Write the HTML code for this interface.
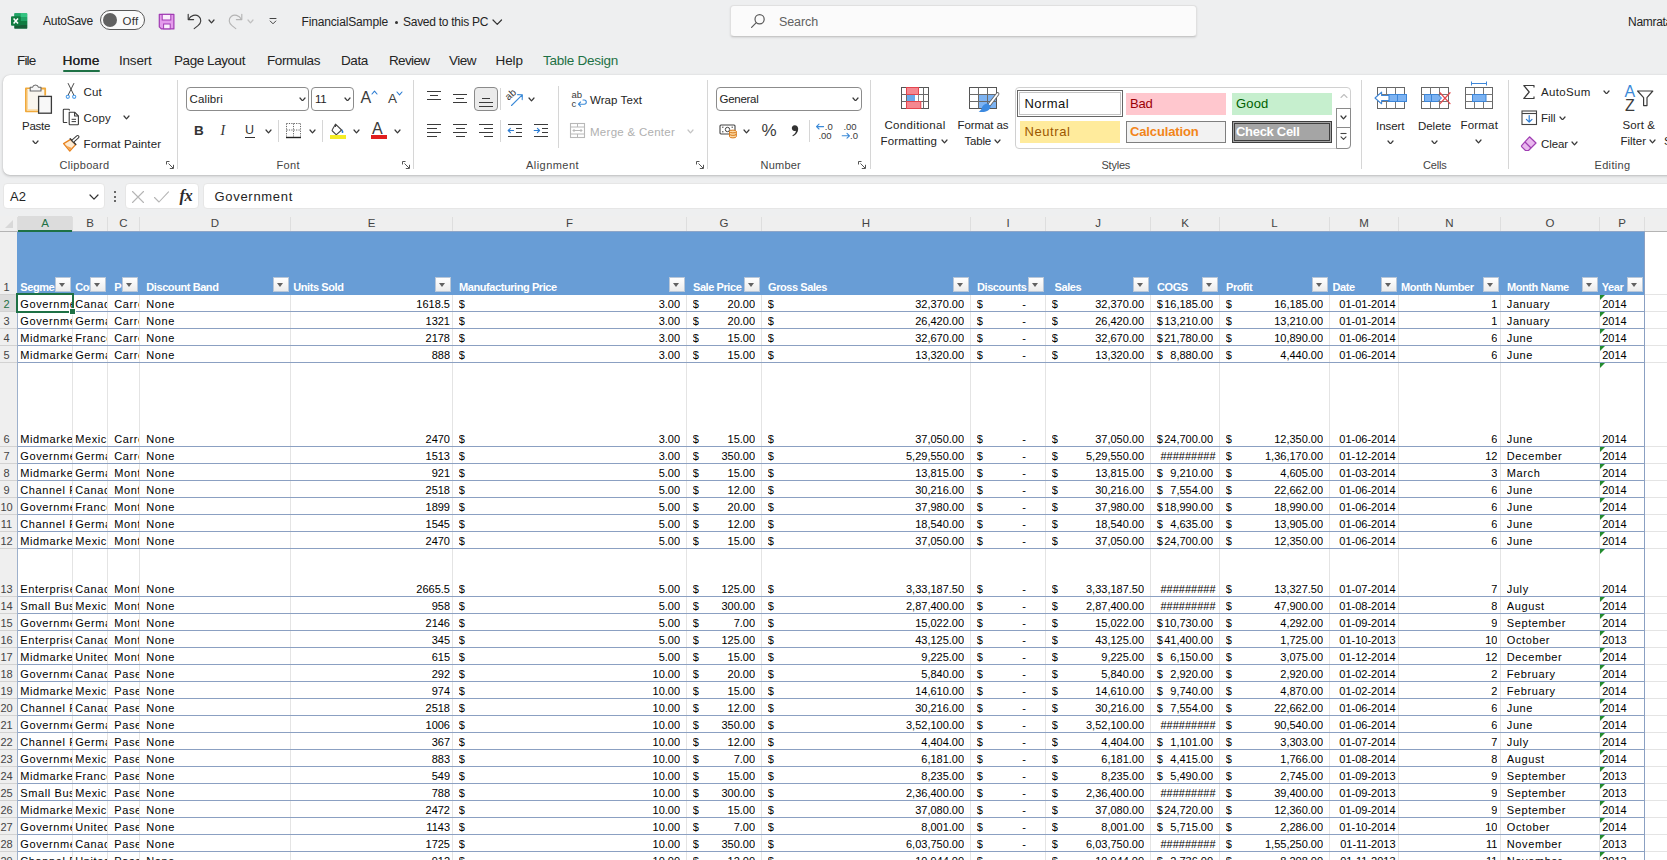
<!DOCTYPE html>
<html lang="en"><head><meta charset="utf-8"><title>FinancialSample - Excel</title>
<style>
html,body{margin:0;padding:0;width:1667px;height:860px;overflow:hidden;}
body{background:#eeeff0;}
#root{position:relative;width:1667px;height:860px;overflow:hidden;background:#eeeff0;font-family:"Liberation Sans",sans-serif;}
.b{position:absolute;box-sizing:border-box;}
.t{position:absolute;white-space:nowrap;}
.c{position:absolute;white-space:nowrap;overflow:hidden;font-size:11px;line-height:17px;height:17px;color:#000;}
.h{position:absolute;white-space:nowrap;overflow:hidden;font-size:11px;line-height:17px;height:17px;color:#fff;font-weight:bold;letter-spacing:-0.42px;}
.r{text-align:right;}
.x{letter-spacing:0.6px;}
.rh{position:absolute;left:0;width:13px;text-align:center;font-size:11px;line-height:17px;height:17px;color:#444;}
.ch{position:absolute;top:216px;height:15px;line-height:15px;font-size:11.5px;color:#4a4a4a;text-align:center;}
.fb{position:absolute;width:16px;height:15px;box-sizing:border-box;background:linear-gradient(#ffffff,#ececec);border:1px solid #b9c7d8;}
.fb:after{content:"";position:absolute;left:3.2px;top:5px;border-left:3.8px solid transparent;border-right:3.8px solid transparent;border-top:4.2px solid #616161;}
.gt{position:absolute;width:0;height:0;border-top:5.5px solid #228b2e;border-right:5.5px solid transparent;}
</style></head>
<body>
<div id="root">
<svg class="b" style="left:10.0px;top:12.0px;" width="18" height="18" viewBox="0 0 18 18">
<rect x="4.4" y="1.2" width="12.8" height="15.4" rx="1.2" fill="#21a366"/>
<rect x="4.4" y="1.2" width="6.4" height="3.9" fill="#21a366"/>
<rect x="10.8" y="1.2" width="6.4" height="3.9" fill="#33c481"/>
<rect x="4.4" y="5.1" width="6.4" height="3.9" fill="#107c41"/>
<rect x="10.8" y="5.1" width="6.4" height="3.9" fill="#21a366"/>
<rect x="4.4" y="9" width="6.4" height="3.8" fill="#0f6b38"/>
<rect x="10.8" y="9" width="6.4" height="3.8" fill="#107c41"/>
<rect x="4.4" y="12.8" width="12.8" height="3.8" fill="#185c37"/>
<rect x="1" y="4.2" width="9.6" height="9.6" rx="1" fill="#107c41"/>
<path d="M3.6 6.4 L8 11.6 M8 6.4 L3.6 11.6" stroke="#fff" stroke-width="1.5" fill="none"/>
</svg>
<div class="t" style="left:43.0px;top:13.0px;font-size:12px;line-height:16px;color:#242424;letter-spacing:-0.25px;">AutoSave</div>
<div class="b" style="left:99.8px;top:10.0px;width:45.0px;height:20.0px;border:1.3px solid #585858;border-radius:10px;background:#fafafa;"></div>
<div class="b" style="left:102.8px;top:13.0px;width:14.0px;height:14.0px;border-radius:7px;background:#616161;"></div>
<div class="t" style="left:122.5px;top:13.0px;font-size:11.5px;line-height:16px;color:#333;letter-spacing:0.30px;">Off</div>
<svg class="b" style="left:157.5px;top:12.5px;" width="17" height="17" viewBox="0 0 17 17">
<path d="M1.3 1.3 H15.9 V15.9 H3.3 L1.3 13.9 Z" fill="#e49bec" stroke="#a03bb3" stroke-width="1.2" stroke-linejoin="round"/>
<rect x="4.2" y="1.4" width="8.6" height="5.6" fill="#fbeefc" stroke="#a03bb3" stroke-width="1"/>
<rect x="5.6" y="11" width="6.6" height="4.8" fill="#fbeefc" stroke="#a03bb3" stroke-width="1"/>
</svg>
<svg class="b" style="left:186.0px;top:12.0px;" width="18" height="18" viewBox="0 0 18 18">
<path d="M2.2 2.2 V7.6 H7.6" fill="none" stroke="#3b3b3b" stroke-width="1.15" stroke-linecap="round" stroke-linejoin="round"/>
<path d="M2.6 7.2 C5 3.2 9.5 2 12.6 4.2 C16 6.8 15.2 11.2 12 13.6 L8.2 16.6" fill="none" stroke="#3b3b3b" stroke-width="1.15" stroke-linecap="round"/>
</svg>
<svg class="b" style="left:208.0px;top:19.1px;" width="7" height="4.8" viewBox="0 0 7 4.8"><path d="M1 1 L3.50 3.80 L6.00 1" fill="none" stroke="#3a3a3a" stroke-width="1.25" stroke-linecap="round" stroke-linejoin="round"/></svg>
<svg class="b" style="left:226.0px;top:12.0px;" width="18" height="18" viewBox="0 0 18 18">
<path d="M15.8 2.2 V7.6 H10.4" fill="none" stroke="#b4b4b4" stroke-width="1.15" stroke-linecap="round" stroke-linejoin="round"/>
<path d="M15.4 7.2 C13 3.2 8.5 2 5.4 4.2 C2 6.8 2.8 11.2 6 13.6 L9.8 16.6" fill="none" stroke="#b4b4b4" stroke-width="1.15" stroke-linecap="round"/>
</svg>
<svg class="b" style="left:247.0px;top:19.1px;" width="7" height="4.8" viewBox="0 0 7 4.8"><path d="M1 1 L3.50 3.80 L6.00 1" fill="none" stroke="#c0c0c0" stroke-width="1.25" stroke-linecap="round" stroke-linejoin="round"/></svg>
<svg class="b" style="left:267.5px;top:16.0px;" width="10" height="10" viewBox="0 0 10 10"><path d="M1.6 2.5 H8.4" stroke="#444" stroke-width="1" fill="none"/><path d="M2.2 5 L5 7.8 L7.8 5" fill="none" stroke="#444" stroke-width="1" stroke-linejoin="round" stroke-linecap="round"/></svg>
<div class="t" style="left:301.5px;top:13.5px;font-size:12px;line-height:16px;color:#242424;letter-spacing:-0.15px;">FinancialSample</div>
<div class="b" style="left:394.5px;top:21.0px;width:3.0px;height:3.0px;background:#333;border-radius:2px;"></div>
<div class="t" style="left:403.0px;top:13.5px;font-size:12px;line-height:16px;color:#242424;letter-spacing:-0.27px;">Saved to this PC</div>
<svg class="b" style="left:492.2px;top:18.8px;" width="10.5" height="6.4" viewBox="0 0 10.5 6.4"><path d="M1 1 L5.25 5.40 L9.50 1" fill="none" stroke="#333" stroke-width="1.2" stroke-linecap="round" stroke-linejoin="round"/></svg>
<div class="b" style="left:730.0px;top:5.0px;width:466.5px;height:31.5px;background:#fbfbfb;border:1px solid #e0e0e0;border-bottom-color:#c8c8c8;border-radius:4px;box-shadow:0 1px 2px rgba(0,0,0,.10);"></div>
<svg class="b" style="left:750.0px;top:13.0px;" width="16" height="16" viewBox="0 0 16 16"><circle cx="9.6" cy="6.2" r="4.6" fill="none" stroke="#5a5a5a" stroke-width="1.2"/><path d="M6.3 9.6 L1.6 14.4" stroke="#5a5a5a" stroke-width="1.2" stroke-linecap="round"/></svg>
<div class="t" style="left:779.0px;top:13.6px;font-size:12.5px;line-height:16px;color:#616161;letter-spacing:-0.10px;">Search</div>
<div class="t" style="left:1628.0px;top:13.5px;font-size:12px;line-height:16px;color:#242424;letter-spacing:-0.29px;">Namrata</div>
<div class="t" style="left:17.0px;top:51.5px;font-size:13.5px;line-height:18px;color:#242424;letter-spacing:-0.82px;">File</div>
<div class="t" style="left:62.5px;top:51.5px;font-size:13.5px;line-height:18px;color:#242424;letter-spacing:0.24px;text-shadow:0.35px 0 0 #242424;">Home</div>
<div class="t" style="left:119.0px;top:51.5px;font-size:13.5px;line-height:18px;color:#242424;letter-spacing:-0.21px;">Insert</div>
<div class="t" style="left:174.0px;top:51.5px;font-size:13.5px;line-height:18px;color:#242424;letter-spacing:-0.44px;">Page Layout</div>
<div class="t" style="left:267.0px;top:51.5px;font-size:13.5px;line-height:18px;color:#242424;letter-spacing:-0.41px;">Formulas</div>
<div class="t" style="left:341.0px;top:51.5px;font-size:13.5px;line-height:18px;color:#242424;letter-spacing:-0.38px;">Data</div>
<div class="t" style="left:389.0px;top:51.5px;font-size:13.5px;line-height:18px;color:#242424;letter-spacing:-0.63px;">Review</div>
<div class="t" style="left:449.0px;top:51.5px;font-size:13.5px;line-height:18px;color:#242424;letter-spacing:-0.50px;">View</div>
<div class="t" style="left:495.5px;top:51.5px;font-size:13.5px;line-height:18px;color:#242424;letter-spacing:-0.07px;">Help</div>
<div class="t" style="left:543.0px;top:51.5px;font-size:13.5px;line-height:18px;color:#1e7145;letter-spacing:-0.26px;">Table Design</div>
<div class="b" style="left:62.5px;top:69.7px;width:37.0px;height:2.1px;background:#1e7145;border-radius:1px;"></div>
<div class="b" style="left:3.0px;top:75.0px;width:1700.0px;height:99.5px;background:#fff;border-radius:7px;box-shadow:0 1px 3px rgba(0,0,0,.22),0 0 1px rgba(0,0,0,.15);"></div>
<svg class="b" style="left:23.0px;top:82.0px;" width="30" height="33" viewBox="0 0 30 33">
<path d="M7.5 6.5 H2.9 V29.3 H15.5" fill="none" stroke="#f0a93b" stroke-width="1.8" stroke-linejoin="round"/>
<path d="M4.6 7 V27.6 H15.5 V14.2 H22 V7 Z" fill="#faf6ee"/>
<path d="M4.4 8 V27.8 H15" fill="none" stroke="#fbd9a0" stroke-width="1.2"/>
<path d="M17.5 6.5 H22.2 V13.5" fill="none" stroke="#f0a93b" stroke-width="1.8" stroke-linejoin="round"/>
<path d="M7.2 9 V5.2 H9.6 a3 3 0 0 1 5.8 0 H18 V9 Z" fill="#f6f6f6" stroke="#6a6a6a" stroke-width="1.1" stroke-linejoin="round"/>
<rect x="15.6" y="14.4" width="12.8" height="16.8" fill="#f8f8f8" stroke="#3a3a3a" stroke-width="1.3"/>
</svg>
<div class="t" style="left:22.0px;top:118.0px;font-size:11.5px;line-height:16px;color:#242424;letter-spacing:-0.28px;">Paste</div>
<svg class="b" style="left:32.0px;top:139.6px;" width="7" height="4.8" viewBox="0 0 7 4.8"><path d="M1 1 L3.50 3.80 L6.00 1" fill="none" stroke="#3a3a3a" stroke-width="1.25" stroke-linecap="round" stroke-linejoin="round"/></svg>
<svg class="b" style="left:64.0px;top:82.0px;" width="14" height="18" viewBox="0 0 14 18">
<path d="M4.2 1.5 L9.8 13 M9.8 1.5 L4.2 13" stroke="#4a4a4a" stroke-width="1" fill="none" stroke-linecap="round"/>
<circle cx="3.8" cy="14.8" r="1.6" fill="none" stroke="#4a9be8" stroke-width="1.1"/>
<circle cx="10.2" cy="14.8" r="1.6" fill="none" stroke="#4a9be8" stroke-width="1.1"/>
</svg>
<div class="t" style="left:83.5px;top:84.0px;font-size:11.5px;line-height:16px;color:#242424;letter-spacing:0.20px;">Cut</div>
<svg class="b" style="left:62.0px;top:108.0px;" width="18" height="18" viewBox="0 0 18 18">
<path d="M7.4 2.6 V1.9 a.7 .7 0 0 0 -.7 -.7 H2 a.7 .7 0 0 0 -.7 .7 V13.8 a.7 .7 0 0 0 .7 .7 H5.2" fill="none" stroke="#3a3a3a" stroke-width="1.1"/>
<path d="M7.2 4.2 H12.6 L16.4 8 V16 a.7 .7 0 0 1 -.7 .7 H7.9 a.7 .7 0 0 1 -.7 -.7 Z" fill="#fff" stroke="#3a3a3a" stroke-width="1.1" stroke-linejoin="round"/>
<path d="M12.6 4.2 V8 H16.4" fill="none" stroke="#3a3a3a" stroke-width="1.1" stroke-linejoin="round"/>
<path d="M9.6 11.3 H14 M9.6 13.6 H14" stroke="#3a3a3a" stroke-width="1"/>
</svg>
<div class="t" style="left:83.5px;top:110.0px;font-size:11.5px;line-height:16px;color:#242424;letter-spacing:0.16px;">Copy</div>
<svg class="b" style="left:123.0px;top:115.1px;" width="7" height="4.8" viewBox="0 0 7 4.8"><path d="M1 1 L3.50 3.80 L6.00 1" fill="none" stroke="#3a3a3a" stroke-width="1.25" stroke-linecap="round" stroke-linejoin="round"/></svg>
<svg class="b" style="left:62.0px;top:134.0px;" width="18" height="18" viewBox="0 0 18 18">
<path d="M1.6 9.6 L8.6 5.4 L13.6 10.6 L7.8 17 Z" fill="#fdebd3" stroke="#e8831f" stroke-width="1.3" stroke-linejoin="round"/>
<path d="M3 10.2 L8 16.2 L10 14 L5 12 Z" fill="#f5a34d"/>
<path d="M8.2 4.8 L13.8 10.6" stroke="#3a3a3a" stroke-width="1.4" stroke-linecap="round"/>
<path d="M11.4 6.6 L15.6 2.8" stroke="#3a3a3a" stroke-width="3.6" stroke-linecap="round"/>
<path d="M11.4 6.6 L15.6 2.8" stroke="#fff" stroke-width="1.6" stroke-linecap="round"/>
</svg>
<div class="t" style="left:83.5px;top:135.5px;font-size:11.5px;line-height:16px;color:#242424;letter-spacing:0.11px;">Format Painter</div>
<div class="t" style="left:59.5px;top:157.0px;font-size:11px;line-height:16px;color:#444;letter-spacing:0.32px;">Clipboard</div>
<svg class="b" style="left:166.0px;top:161.0px;" width="9" height="9" viewBox="0 0 9 9"><path d="M0.5 3.5 V0.5 H3.5 M2.5 2.5 L7 7 M7.5 3.8 V7.5 H3.8" fill="none" stroke="#555" stroke-width="1"/></svg>
<div class="b" style="left:177.0px;top:80.0px;width:1.0px;height:89.0px;background:#d6d6d6;"></div>
<div class="b" style="left:186.0px;top:87.0px;width:123.0px;height:23.5px;border:1px solid #8c8c8c;border-radius:4px;background:#fff;"></div>
<div class="t" style="left:189.5px;top:90.5px;font-size:11.5px;line-height:16px;color:#242424;letter-spacing:0.13px;">Calibri</div>
<svg class="b" style="left:298.5px;top:96.6px;" width="7" height="4.8" viewBox="0 0 7 4.8"><path d="M1 1 L3.50 3.80 L6.00 1" fill="none" stroke="#3a3a3a" stroke-width="1.25" stroke-linecap="round" stroke-linejoin="round"/></svg>
<div class="b" style="left:311.0px;top:87.0px;width:42.5px;height:23.5px;border:1px solid #8c8c8c;border-radius:4px;background:#fff;"></div>
<div class="t" style="left:315.0px;top:90.5px;font-size:11.5px;line-height:16px;color:#242424;letter-spacing:-0.21px;">11</div>
<svg class="b" style="left:343.5px;top:96.6px;" width="7" height="4.8" viewBox="0 0 7 4.8"><path d="M1 1 L3.50 3.80 L6.00 1" fill="none" stroke="#3a3a3a" stroke-width="1.25" stroke-linecap="round" stroke-linejoin="round"/></svg>
<div class="t" style="left:360.5px;top:89.0px;font-size:16px;line-height:18px;color:#3b3b3b;letter-spacing:-0.17px;">A</div>
<svg class="b" style="left:370.5px;top:90.0px;" width="7" height="5" viewBox="0 0 7 5"><path d="M1 4 L3.5 1.2 L6 4" fill="none" stroke="#2b7cd3" stroke-width="1.1" stroke-linecap="round" stroke-linejoin="round"/></svg>
<div class="t" style="left:388.0px;top:91.0px;font-size:13.5px;line-height:16px;color:#3b3b3b;letter-spacing:0.00px;">A</div>
<svg class="b" style="left:396.0px;top:90.5px;" width="7" height="5" viewBox="0 0 7 5"><path d="M1 1 L3.5 3.8 L6 1" fill="none" stroke="#2b7cd3" stroke-width="1.1" stroke-linecap="round" stroke-linejoin="round"/></svg>
<div class="t" style="left:194.0px;top:122.5px;font-size:13.5px;line-height:16px;color:#333;letter-spacing:-0.75px;font-weight:bold;">B</div>
<div class="t" style="left:220.5px;top:122.5px;font-size:14px;line-height:16px;color:#333;letter-spacing:1.20px;font-family:'Liberation Serif',serif;font-style:italic;">I</div>
<div class="t" style="left:245.0px;top:121.5px;font-size:12.5px;line-height:16px;color:#333;letter-spacing:-0.03px;">U</div>
<div class="b" style="left:245.0px;top:136.5px;width:9.5px;height:1.0px;background:#333;"></div>
<svg class="b" style="left:264.5px;top:129.1px;" width="7" height="4.8" viewBox="0 0 7 4.8"><path d="M1 1 L3.50 3.80 L6.00 1" fill="none" stroke="#3a3a3a" stroke-width="1.25" stroke-linecap="round" stroke-linejoin="round"/></svg>
<div class="b" style="left:278.0px;top:120.0px;width:1.0px;height:22.0px;background:#d6d6d6;"></div>
<svg class="b" style="left:285.0px;top:122.0px;" width="17" height="17" viewBox="0 0 17 17">
<path d="M1.5 1.5 H15.5 M1.5 1.5 V14.5 M15.5 1.5 V14.5 M8.5 1.5 V14.5 M1.5 8 H15.5" stroke="#666" stroke-width="1" stroke-dasharray="1.2 1.2" fill="none"/>
<path d="M1 15.5 H16" stroke="#222" stroke-width="1.4"/>
</svg>
<svg class="b" style="left:309.0px;top:129.1px;" width="7" height="4.8" viewBox="0 0 7 4.8"><path d="M1 1 L3.50 3.80 L6.00 1" fill="none" stroke="#3a3a3a" stroke-width="1.25" stroke-linecap="round" stroke-linejoin="round"/></svg>
<div class="b" style="left:322.0px;top:120.0px;width:1.0px;height:22.0px;background:#d6d6d6;"></div>
<svg class="b" style="left:329.0px;top:122.0px;" width="18" height="18" viewBox="0 0 18 18">
<path d="M6.5 2.2 L12.6 8 L8 12.2 a1 1 0 0 1 -1.4 0 L3.4 9 a1 1 0 0 1 0 -1.4 Z" fill="#fff" stroke="#444" stroke-width="1.1" stroke-linejoin="round"/>
<path d="M6.5 2.2 V5" stroke="#444" stroke-width="1.1"/>
<path d="M13.2 7.2 c1.2 1.8 1.6 2.8 1 3.6 c-.6 .6 -1.6 .2 -1.6 -.8 c0 -.8 .3 -1.6 .6 -2.8 Z" fill="#2b7cd3"/>
<rect x="1" y="13" width="16" height="4" fill="#f4ec25"/>
</svg>
<svg class="b" style="left:352.5px;top:129.1px;" width="7" height="4.8" viewBox="0 0 7 4.8"><path d="M1 1 L3.50 3.80 L6.00 1" fill="none" stroke="#3a3a3a" stroke-width="1.25" stroke-linecap="round" stroke-linejoin="round"/></svg>
<div class="t" style="left:372.0px;top:120.5px;font-size:16px;line-height:16px;color:#3b3b3b;letter-spacing:1.20px;">A</div>
<div class="b" style="left:371.0px;top:135.0px;width:16.0px;height:4.0px;background:#e01e1e;"></div>
<svg class="b" style="left:394.0px;top:129.1px;" width="7" height="4.8" viewBox="0 0 7 4.8"><path d="M1 1 L3.50 3.80 L6.00 1" fill="none" stroke="#3a3a3a" stroke-width="1.25" stroke-linecap="round" stroke-linejoin="round"/></svg>
<div class="t" style="left:276.5px;top:157.0px;font-size:11px;line-height:16px;color:#444;letter-spacing:0.37px;">Font</div>
<svg class="b" style="left:402.0px;top:161.0px;" width="9" height="9" viewBox="0 0 9 9"><path d="M0.5 3.5 V0.5 H3.5 M2.5 2.5 L7 7 M7.5 3.8 V7.5 H3.8" fill="none" stroke="#555" stroke-width="1"/></svg>
<div class="b" style="left:413.0px;top:80.0px;width:1.0px;height:89.0px;background:#d6d6d6;"></div>
<div class="b" style="left:427.0px;top:91.0px;width:14.0px;height:1.0px;background:#3b3b3b;"></div>
<div class="b" style="left:430.0px;top:95.0px;width:8.0px;height:1.0px;background:#3b3b3b;"></div>
<div class="b" style="left:427.0px;top:99.0px;width:14.0px;height:1.0px;background:#3b3b3b;"></div>
<div class="b" style="left:453.0px;top:94.0px;width:14.0px;height:1.0px;background:#3b3b3b;"></div>
<div class="b" style="left:456.0px;top:98.0px;width:8.0px;height:1.0px;background:#3b3b3b;"></div>
<div class="b" style="left:453.0px;top:102.0px;width:14.0px;height:1.0px;background:#3b3b3b;"></div>
<div class="b" style="left:474.4px;top:87.0px;width:23.6px;height:23.6px;background:#ebebeb;border:1px solid #8a8a8a;border-radius:4px;"></div>
<div class="b" style="left:482.0px;top:98.0px;width:8.0px;height:1.0px;background:#3b3b3b;"></div>
<div class="b" style="left:479.0px;top:102.0px;width:14.0px;height:1.0px;background:#3b3b3b;"></div>
<div class="b" style="left:479.0px;top:106.0px;width:14.0px;height:1.0px;background:#3b3b3b;"></div>
<div class="b" style="left:500.0px;top:88.0px;width:1.0px;height:22.0px;background:#d6d6d6;"></div>
<svg class="b" style="left:505.0px;top:88.0px;" width="20" height="20" viewBox="0 0 20 20">
<text x="1" y="10" font-size="10" font-family="Liberation Sans" fill="#3a3a3a" transform="rotate(-42 6 8)">ab</text>
<path d="M6.5 17.5 L17 7.2 M12.6 6.6 L17.4 6.8 L17.2 11.6" fill="none" stroke="#3b8ad8" stroke-width="1.1" stroke-linecap="round" stroke-linejoin="round"/>
</svg>
<svg class="b" style="left:528.0px;top:97.1px;" width="7" height="4.8" viewBox="0 0 7 4.8"><path d="M1 1 L3.50 3.80 L6.00 1" fill="none" stroke="#3a3a3a" stroke-width="1.25" stroke-linecap="round" stroke-linejoin="round"/></svg>
<div class="b" style="left:558.0px;top:86.0px;width:1.0px;height:62.0px;background:#d6d6d6;"></div>
<svg class="b" style="left:570.0px;top:90.0px;" width="18" height="19" viewBox="0 0 18 19">
<text x="1.5" y="8" font-size="9.5" font-family="Liberation Sans" fill="#3a3a3a">ab</text>
<text x="1.5" y="16.5" font-size="9.5" font-family="Liberation Sans" fill="#3a3a3a">c</text>
<path d="M13 10 H14.2 a2 2 0 0 1 0 4.2 H8.6 M10.6 12 L8.4 14.2 L10.6 16.4" fill="none" stroke="#3b8ad8" stroke-width="1.1" stroke-linecap="round" stroke-linejoin="round"/>
</svg>
<div class="t" style="left:590.0px;top:91.5px;font-size:11.5px;line-height:16px;color:#242424;letter-spacing:0.07px;">Wrap Text</div>
<div class="b" style="left:427.0px;top:124.0px;width:14.0px;height:1.0px;background:#3b3b3b;"></div>
<div class="b" style="left:453.0px;top:124.0px;width:14.0px;height:1.0px;background:#3b3b3b;"></div>
<div class="b" style="left:479.0px;top:124.0px;width:14.0px;height:1.0px;background:#3b3b3b;"></div>
<div class="b" style="left:427.0px;top:128.0px;width:9.5px;height:1.0px;background:#3b3b3b;"></div>
<div class="b" style="left:455.5px;top:128.0px;width:9.0px;height:1.0px;background:#3b3b3b;"></div>
<div class="b" style="left:483.5px;top:128.0px;width:9.5px;height:1.0px;background:#3b3b3b;"></div>
<div class="b" style="left:427.0px;top:132.0px;width:14.0px;height:1.0px;background:#3b3b3b;"></div>
<div class="b" style="left:453.0px;top:132.0px;width:14.0px;height:1.0px;background:#3b3b3b;"></div>
<div class="b" style="left:479.0px;top:132.0px;width:14.0px;height:1.0px;background:#3b3b3b;"></div>
<div class="b" style="left:427.0px;top:136.0px;width:9.5px;height:1.0px;background:#3b3b3b;"></div>
<div class="b" style="left:455.5px;top:136.0px;width:9.0px;height:1.0px;background:#3b3b3b;"></div>
<div class="b" style="left:483.5px;top:136.0px;width:9.5px;height:1.0px;background:#3b3b3b;"></div>
<div class="b" style="left:500.0px;top:120.0px;width:1.0px;height:22.0px;background:#d6d6d6;"></div>
<div class="b" style="left:508.0px;top:124.0px;width:14.0px;height:1.0px;background:#3b3b3b;"></div>
<div class="b" style="left:516.0px;top:128.0px;width:6.0px;height:1.0px;background:#3b3b3b;"></div>
<div class="b" style="left:516.0px;top:132.0px;width:6.0px;height:1.0px;background:#3b3b3b;"></div>
<div class="b" style="left:508.0px;top:136.0px;width:14.0px;height:1.0px;background:#3b3b3b;"></div>
<div class="b" style="left:534.0px;top:124.0px;width:14.0px;height:1.0px;background:#3b3b3b;"></div>
<div class="b" style="left:542.0px;top:128.0px;width:6.0px;height:1.0px;background:#3b3b3b;"></div>
<div class="b" style="left:542.0px;top:132.0px;width:6.0px;height:1.0px;background:#3b3b3b;"></div>
<div class="b" style="left:534.0px;top:136.0px;width:14.0px;height:1.0px;background:#3b3b3b;"></div>
<svg class="b" style="left:507.0px;top:126.0px;" width="8" height="9" viewBox="0 0 8 9"><path d="M1.2 4.5 H6.6 M3.4 2.3 L1.2 4.5 L3.4 6.7" fill="none" stroke="#2b7cd3" stroke-width="1.1" stroke-linecap="round" stroke-linejoin="round"/></svg>
<svg class="b" style="left:533.0px;top:126.0px;" width="8" height="9" viewBox="0 0 8 9"><path d="M1.2 4.5 H6.6 M4.4 2.3 L6.6 4.5 L4.4 6.7" fill="none" stroke="#2b7cd3" stroke-width="1.1" stroke-linecap="round" stroke-linejoin="round"/></svg>
<svg class="b" style="left:569.0px;top:122.0px;" width="17" height="17" viewBox="0 0 17 17">
<rect x="1.5" y="1.5" width="14" height="14" fill="none" stroke="#b8b8b8" stroke-width="1.1"/>
<path d="M1.5 5 H15.5 M1.5 12 H15.5 M8.5 1.5 V5 M8.5 12 V15.5" stroke="#b8b8b8" stroke-width="1"/>
<path d="M4 8.5 H13 M5.5 7 L4 8.5 L5.5 10 M11.5 7 L13 8.5 L11.5 10" fill="none" stroke="#b8b8b8" stroke-width="1"/>
</svg>
<div class="t" style="left:590.0px;top:123.5px;font-size:11.5px;line-height:16px;color:#b0b0b0;letter-spacing:0.28px;">Merge &amp; Center</div>
<svg class="b" style="left:686.5px;top:129.1px;" width="7" height="4.8" viewBox="0 0 7 4.8"><path d="M1 1 L3.50 3.80 L6.00 1" fill="none" stroke="#c4c4c4" stroke-width="1.25" stroke-linecap="round" stroke-linejoin="round"/></svg>
<div class="t" style="left:526.0px;top:157.0px;font-size:11px;line-height:16px;color:#444;letter-spacing:0.45px;">Alignment</div>
<svg class="b" style="left:696.0px;top:161.0px;" width="9" height="9" viewBox="0 0 9 9"><path d="M0.5 3.5 V0.5 H3.5 M2.5 2.5 L7 7 M7.5 3.8 V7.5 H3.8" fill="none" stroke="#555" stroke-width="1"/></svg>
<div class="b" style="left:707.0px;top:80.0px;width:1.0px;height:89.0px;background:#d6d6d6;"></div>
<div class="b" style="left:716.0px;top:87.0px;width:145.5px;height:23.5px;border:1px solid #8c8c8c;border-radius:4px;background:#fff;"></div>
<div class="t" style="left:719.5px;top:90.5px;font-size:11.5px;line-height:16px;color:#242424;letter-spacing:-0.27px;">General</div>
<svg class="b" style="left:852.0px;top:96.6px;" width="7" height="4.8" viewBox="0 0 7 4.8"><path d="M1 1 L3.50 3.80 L6.00 1" fill="none" stroke="#3a3a3a" stroke-width="1.25" stroke-linecap="round" stroke-linejoin="round"/></svg>
<svg class="b" style="left:719.0px;top:123.0px;" width="19" height="16" viewBox="0 0 19 16">
<rect x="1" y="2" width="15" height="9" rx="1" fill="#fff" stroke="#444" stroke-width="1.1"/>
<circle cx="8.5" cy="6.5" r="2.2" fill="none" stroke="#444" stroke-width="1"/>
<path d="M3 4.2 h1.5 M12.5 4.2 h1.5 M3 8.8 h1.5" stroke="#444" stroke-width="1"/>
<path d="M10.5 8.5 v5 a3.4 1.4 0 0 0 6.8 0 v-5" fill="#fbd9a5" stroke="#d97a18" stroke-width="1"/>
<ellipse cx="13.9" cy="8.5" rx="3.4" ry="1.4" fill="#fbd9a5" stroke="#d97a18" stroke-width="1"/>
<path d="M10.5 11 a3.4 1.4 0 0 0 6.8 0" fill="none" stroke="#d97a18" stroke-width="1"/>
</svg>
<svg class="b" style="left:743.0px;top:129.1px;" width="7" height="4.8" viewBox="0 0 7 4.8"><path d="M1 1 L3.50 3.80 L6.00 1" fill="none" stroke="#3a3a3a" stroke-width="1.25" stroke-linecap="round" stroke-linejoin="round"/></svg>
<div class="t" style="left:761.5px;top:122.0px;font-size:17px;line-height:18px;color:#3b3b3b;letter-spacing:-0.11px;">%</div>
<svg class="b" style="left:789.0px;top:124.0px;" width="12" height="14" viewBox="0 0 12 14"><path d="M5.8 1.2 a2.9 2.9 0 1 0 1.2 5.5 c-.3 2 -1.6 3.6 -3.6 4.6 l.5 .9 c3.2 -1.3 5.3 -3.9 5.3 -7.4 c0 -2.1 -1.4 -3.6 -3.4 -3.6 Z" fill="#333"/></svg>
<div class="b" style="left:809.0px;top:120.0px;width:1.0px;height:22.0px;background:#d6d6d6;"></div>
<svg class="b" style="left:815.0px;top:121.0px;" width="18" height="21" viewBox="0 0 18 21">
<path d="M1.5 5.6 H8.6 M4 3.2 L1.5 5.6 L4 8" fill="none" stroke="#3b8ad8" stroke-width="1.1" stroke-linecap="round" stroke-linejoin="round"/>
<text x="9.8" y="9" font-size="9.5" font-family="Liberation Sans" fill="#3a3a3a">.0</text>
<text x="3.6" y="18" font-size="9.5" font-family="Liberation Sans" fill="#3a3a3a" textLength="13">.00</text>
</svg>
<svg class="b" style="left:841.0px;top:121.0px;" width="18" height="21" viewBox="0 0 18 21">
<text x="2.6" y="9" font-size="9.5" font-family="Liberation Sans" fill="#3a3a3a" textLength="13">.00</text>
<path d="M1.2 14.8 H8.4 M6 12.4 L8.5 14.8 L6 17.2" fill="none" stroke="#3b8ad8" stroke-width="1.1" stroke-linecap="round" stroke-linejoin="round"/>
<text x="9" y="18" font-size="9.5" font-family="Liberation Sans" fill="#3a3a3a">.0</text>
</svg>
<div class="t" style="left:760.5px;top:157.0px;font-size:11px;line-height:16px;color:#444;letter-spacing:0.23px;">Number</div>
<svg class="b" style="left:858.0px;top:161.0px;" width="9" height="9" viewBox="0 0 9 9"><path d="M0.5 3.5 V0.5 H3.5 M2.5 2.5 L7 7 M7.5 3.8 V7.5 H3.8" fill="none" stroke="#555" stroke-width="1"/></svg>
<div class="b" style="left:869.5px;top:80.0px;width:1.0px;height:89.0px;background:#d6d6d6;"></div>
<svg class="b" style="left:900.0px;top:86.0px;" width="30" height="24" viewBox="0 0 30 24">
<rect x="1.5" y="1.5" width="27" height="21" fill="#fff" stroke="#555" stroke-width="1"/>
<path d="M1.5 8.5 H28.5 M1.5 15.5 H28.5 M6.5 1.5 V22.5 M23.5 1.5 V22.5" stroke="#6a6a6a" stroke-width="1"/>
<path d="M18.5 8.5 V15.5" stroke="#8a8a8a" stroke-width="1"/>
<rect x="6.5" y="1.5" width="12" height="7" fill="#f58790" stroke="#e2454e" stroke-width="1"/>
<rect x="7" y="9" width="8" height="6" fill="#6aa9ea"/>
<rect x="6.5" y="15.5" width="14.3" height="7" fill="#f58790" stroke="#e2454e" stroke-width="1"/>
</svg>
<div class="t" style="left:884.5px;top:117.0px;font-size:11.5px;line-height:16px;color:#242424;letter-spacing:0.32px;">Conditional</div>
<div class="t" style="left:880.5px;top:133.0px;font-size:11.5px;line-height:16px;color:#242424;letter-spacing:0.16px;">Formatting</div>
<svg class="b" style="left:941.0px;top:139.1px;" width="7" height="4.8" viewBox="0 0 7 4.8"><path d="M1 1 L3.50 3.80 L6.00 1" fill="none" stroke="#3a3a3a" stroke-width="1.25" stroke-linecap="round" stroke-linejoin="round"/></svg>
<svg class="b" style="left:968.0px;top:85.0px;" width="33" height="29" viewBox="0 0 33 29">
<rect x="1.5" y="2.5" width="27" height="21" fill="#fff" stroke="#555" stroke-width="1"/>
<rect x="11" y="9.5" width="17" height="13.5" fill="#7db3f2"/>
<path d="M1.5 9.5 H28.5 M1.5 16.5 H28.5 M10.5 2.5 V23.5 M19.5 2.5 V23.5" stroke="#6a6a6a" stroke-width="1"/>
<path d="M29.6 9 L21.6 19.4" stroke="#666" stroke-width="3.6" stroke-linecap="round"/>
<path d="M29.6 9 L21.6 19.4" stroke="#fff" stroke-width="1.8" stroke-linecap="round"/>
<path d="M20 18.4 c-3.4 -.2 -5.6 2 -6.4 5 c-.4 1.4 -1.4 2.4 -3 3.2 c5.4 1.6 11 -.6 12.2 -5.2 Z" fill="#3d8ae0"/>
</svg>
<div class="t" style="left:957.5px;top:117.0px;font-size:11.5px;line-height:16px;color:#242424;letter-spacing:-0.08px;">Format as</div>
<div class="t" style="left:964.5px;top:133.0px;font-size:11.5px;line-height:16px;color:#242424;letter-spacing:-0.20px;">Table</div>
<svg class="b" style="left:993.5px;top:139.1px;" width="7" height="4.8" viewBox="0 0 7 4.8"><path d="M1 1 L3.50 3.80 L6.00 1" fill="none" stroke="#3a3a3a" stroke-width="1.25" stroke-linecap="round" stroke-linejoin="round"/></svg>
<div class="b" style="left:1015.0px;top:87.0px;width:336.0px;height:61.5px;border:1px solid #d0d0d0;border-radius:4px;background:#fff;"></div>
<div class="b" style="left:1017.0px;top:90.3px;width:106.0px;height:27.2px;border:1px solid #666;background:#fff;"></div>
<div class="b" style="left:1019.0px;top:92.3px;width:102.0px;height:23.2px;border:1px solid #c4c4c4;background:#fff;"></div>
<div class="t" style="left:1024.5px;top:94.5px;font-size:13px;line-height:18px;color:#111;letter-spacing:0.43px;">Normal</div>
<div class="b" style="left:1126.0px;top:93.0px;width:100.0px;height:21.5px;background:#ffc7ce;"></div>
<div class="t" style="left:1130.0px;top:94.5px;font-size:13px;line-height:18px;color:#9c0006;letter-spacing:-0.21px;">Bad</div>
<div class="b" style="left:1231.5px;top:93.0px;width:100.5px;height:21.5px;background:#c6efce;"></div>
<div class="t" style="left:1236.0px;top:94.5px;font-size:13px;line-height:18px;color:#006100;letter-spacing:0.17px;">Good</div>
<div class="b" style="left:1020.0px;top:121.0px;width:100.0px;height:21.5px;background:#ffeb9c;"></div>
<div class="t" style="left:1024.5px;top:122.5px;font-size:13px;line-height:18px;color:#9c5700;letter-spacing:0.58px;">Neutral</div>
<div class="b" style="left:1126.0px;top:121.0px;width:100.0px;height:21.5px;background:#f2f2f2;border:1px solid #7f7f7f;"></div>
<div class="t" style="left:1130.0px;top:122.5px;font-size:13px;line-height:18px;color:#f2851a;letter-spacing:-0.14px;font-weight:bold;">Calculation</div>
<div class="b" style="left:1231.5px;top:121.0px;width:100.5px;height:21.5px;background:#a5a5a5;border:3px double #3f3f3f;"></div>
<div class="t" style="left:1236.0px;top:122.5px;font-size:13px;line-height:18px;color:#fff;letter-spacing:-0.30px;font-weight:bold;">Check Cell</div>
<svg class="b" style="left:1339.5px;top:93.0px;" width="8" height="6" viewBox="0 0 8 6"><path d="M1 4.5 L4 1.5 L7 4.5" fill="none" stroke="#c0c0c0" stroke-width="1.1" stroke-linecap="round" stroke-linejoin="round"/></svg>
<div class="b" style="left:1336.0px;top:107.5px;width:15.0px;height:20.0px;border:1px solid #8a8a8a;border-radius:0;background:#fff;"></div>
<svg class="b" style="left:1340.0px;top:115.1px;" width="7" height="4.8" viewBox="0 0 7 4.8"><path d="M1 1 L3.50 3.80 L6.00 1" fill="none" stroke="#3a3a3a" stroke-width="1.25" stroke-linecap="round" stroke-linejoin="round"/></svg>
<div class="b" style="left:1336.0px;top:126.5px;width:15.0px;height:22.0px;border:1px solid #8a8a8a;border-radius:0 0 4px 0;background:#fff;"></div>
<svg class="b" style="left:1339.0px;top:132.0px;" width="9" height="10" viewBox="0 0 9 10"><path d="M1.5 1.5 H7.5" stroke="#444" stroke-width="1.1"/><path d="M2 4.8 L4.5 7.4 L7 4.8" fill="none" stroke="#444" stroke-width="1.1" stroke-linecap="round" stroke-linejoin="round"/></svg>
<div class="t" style="left:1101.5px;top:157.0px;font-size:11px;line-height:16px;color:#444;letter-spacing:-0.24px;">Styles</div>
<div class="b" style="left:1361.0px;top:80.0px;width:1.0px;height:89.0px;background:#d6d6d6;"></div>
<svg class="b" style="left:1372.0px;top:85.0px;" width="37" height="26" viewBox="0 0 37 26"><rect x="5.5" y="2.5" width="27" height="21" fill="#fff" stroke="#666" stroke-width="1"/><path d="M5.5 9.5 h27 M5.5 16.5 h27 M14.5 2.5 v21 M23.5 2.5 v21" stroke="#777" stroke-width="1" fill="none"/>
<rect x="16.5" y="9.5" width="18" height="7" fill="#7db3f2" stroke="#3d86d8" stroke-width="1"/>
<path d="M25.5 9.5 v7" stroke="#3d86d8" stroke-width="1"/>
<path d="M3 13 L9.6 7.2 V10.5 H17 V15.5 H9.6 V18.8 Z" fill="#fff" stroke="#3d86d8" stroke-width="1.1" stroke-linejoin="round"/>
</svg>
<div class="t" style="left:1376.0px;top:117.5px;font-size:11.5px;line-height:16px;color:#242424;letter-spacing:-0.04px;">Insert</div>
<svg class="b" style="left:1387.0px;top:139.6px;" width="7" height="4.8" viewBox="0 0 7 4.8"><path d="M1 1 L3.50 3.80 L6.00 1" fill="none" stroke="#3a3a3a" stroke-width="1.25" stroke-linecap="round" stroke-linejoin="round"/></svg>
<svg class="b" style="left:1419.0px;top:85.0px;" width="34" height="26" viewBox="0 0 34 26"><rect x="2.5" y="2.5" width="27" height="21" fill="#fff" stroke="#666" stroke-width="1"/><path d="M2.5 9.5 h27 M2.5 16.5 h27 M11.5 2.5 v21 M20.5 2.5 v21" stroke="#777" stroke-width="1" fill="none"/>
<path d="M5.5 9.5 H19 L22.5 13 L19 16.5 H5.5 Z" fill="#7db3f2" stroke="#3d86d8" stroke-width="1" stroke-linejoin="round"/>
<path d="M12.5 9.5 v7" stroke="#3d86d8" stroke-width="1"/>
<path d="M21 7.8 L31 18.6 M31 7.8 L21 18.6" stroke="#e5484d" stroke-width="1.3" stroke-linecap="round"/>
</svg>
<div class="t" style="left:1418.0px;top:117.5px;font-size:11.5px;line-height:16px;color:#242424;letter-spacing:-0.04px;">Delete</div>
<svg class="b" style="left:1430.5px;top:139.6px;" width="7" height="4.8" viewBox="0 0 7 4.8"><path d="M1 1 L3.50 3.80 L6.00 1" fill="none" stroke="#3a3a3a" stroke-width="1.25" stroke-linecap="round" stroke-linejoin="round"/></svg>
<svg class="b" style="left:1463.0px;top:80.0px;" width="32" height="31" viewBox="0 0 32 31"><rect x="2.5" y="7.5" width="27" height="21" fill="#fff" stroke="#666" stroke-width="1"/><path d="M2.5 14.5 h27 M2.5 21.5 h27 M11.5 7.5 v21 M20.5 7.5 v21" stroke="#777" stroke-width="1" fill="none"/>
<rect x="9.5" y="14.5" width="13.5" height="7" fill="#7db3f2" stroke="#3d86d8" stroke-width="1"/>
<path d="M8.5 3.5 H23.5 M8.5 1.5 V5.5 M23.5 1.5 V5.5" stroke="#3d86d8" stroke-width="1"/>
</svg>
<div class="t" style="left:1460.5px;top:117.0px;font-size:11.5px;line-height:16px;color:#242424;letter-spacing:0.18px;">Format</div>
<svg class="b" style="left:1474.5px;top:139.1px;" width="7" height="4.8" viewBox="0 0 7 4.8"><path d="M1 1 L3.50 3.80 L6.00 1" fill="none" stroke="#3a3a3a" stroke-width="1.25" stroke-linecap="round" stroke-linejoin="round"/></svg>
<div class="t" style="left:1423.0px;top:157.0px;font-size:11px;line-height:16px;color:#444;letter-spacing:-0.19px;">Cells</div>
<div class="b" style="left:1508.0px;top:80.0px;width:1.0px;height:89.0px;background:#d6d6d6;"></div>
<svg class="b" style="left:1522.0px;top:84.0px;" width="14" height="16" viewBox="0 0 14 16"><path d="M12 3.5 V1.5 H1.8 L7.2 8 L1.8 14.5 H12 V12.5" fill="none" stroke="#3b3b3b" stroke-width="1.2" stroke-linejoin="round"/></svg>
<div class="t" style="left:1541.0px;top:84.0px;font-size:11.5px;line-height:16px;color:#242424;letter-spacing:0.32px;">AutoSum</div>
<svg class="b" style="left:1603.0px;top:89.6px;" width="7" height="4.8" viewBox="0 0 7 4.8"><path d="M1 1 L3.50 3.80 L6.00 1" fill="none" stroke="#3a3a3a" stroke-width="1.25" stroke-linecap="round" stroke-linejoin="round"/></svg>
<svg class="b" style="left:1521.0px;top:110.0px;" width="17" height="16" viewBox="0 0 17 16">
<rect x="1" y="1" width="14.5" height="13.5" fill="#fff" stroke="#444" stroke-width="1.1"/>
<path d="M1 3.5 H15.5" stroke="#444" stroke-width="1.1"/>
<path d="M8.2 5.5 V12 M5.4 9.4 L8.2 12.2 L11 9.4" fill="none" stroke="#2b7cd3" stroke-width="1.2" stroke-linecap="round" stroke-linejoin="round"/>
</svg>
<div class="t" style="left:1541.0px;top:110.0px;font-size:11.5px;line-height:16px;color:#242424;letter-spacing:-0.05px;">Fill</div>
<svg class="b" style="left:1559.0px;top:115.6px;" width="7" height="4.8" viewBox="0 0 7 4.8"><path d="M1 1 L3.50 3.80 L6.00 1" fill="none" stroke="#3a3a3a" stroke-width="1.25" stroke-linecap="round" stroke-linejoin="round"/></svg>
<svg class="b" style="left:1520.0px;top:135.0px;" width="18" height="17" viewBox="0 0 18 17">
<path d="M9.5 1.8 L16 8 L8.5 15.5 H5.5 L1.8 11.8 a1 1 0 0 1 0 -1.4 Z" fill="#e9b8ee" stroke="#a03fb3" stroke-width="1.2" stroke-linejoin="round"/>
<path d="M5 7 L11 13" stroke="#a03fb3" stroke-width="1.2"/>
</svg>
<div class="t" style="left:1541.0px;top:135.5px;font-size:11.5px;line-height:16px;color:#242424;letter-spacing:-0.10px;">Clear</div>
<svg class="b" style="left:1571.0px;top:141.1px;" width="7" height="4.8" viewBox="0 0 7 4.8"><path d="M1 1 L3.50 3.80 L6.00 1" fill="none" stroke="#3a3a3a" stroke-width="1.25" stroke-linecap="round" stroke-linejoin="round"/></svg>
<div class="t" style="left:1624.5px;top:84.0px;font-size:16px;line-height:16px;color:#3b8ad8;letter-spacing:0.33px;">A</div>
<div class="t" style="left:1625.0px;top:97.6px;font-size:16px;line-height:16px;color:#3b3b3b;letter-spacing:0.22px;">Z</div>
<svg class="b" style="left:1636.0px;top:89.0px;" width="19" height="19" viewBox="0 0 19 19"><path d="M1.6 2 H16.8 L11 8.6 V16.6 H7.6 V8.6 Z" fill="#fff" stroke="#3b3b3b" stroke-width="1.2" stroke-linejoin="round"/></svg>
<div class="t" style="left:1622.5px;top:117.0px;font-size:11.5px;line-height:16px;color:#242424;letter-spacing:0.09px;">Sort &amp;</div>
<div class="t" style="left:1620.5px;top:133.0px;font-size:11.5px;line-height:16px;color:#242424;letter-spacing:-0.01px;">Filter</div>
<svg class="b" style="left:1649.0px;top:139.1px;" width="7" height="4.8" viewBox="0 0 7 4.8"><path d="M1 1 L3.50 3.80 L6.00 1" fill="none" stroke="#3a3a3a" stroke-width="1.25" stroke-linecap="round" stroke-linejoin="round"/></svg>
<div class="t" style="left:1664.0px;top:133.0px;font-size:11.5px;line-height:16px;color:#242424;letter-spacing:0.33px;">S</div>
<div class="t" style="left:1594.5px;top:157.0px;font-size:11px;line-height:16px;color:#444;letter-spacing:0.33px;">Editing</div>
<div class="b" style="left:3.0px;top:183.0px;width:101.5px;height:25.5px;background:#fff;border:1px solid #e6e6e6;border-radius:4px;"></div>
<div class="t" style="left:10.0px;top:187.7px;font-size:13px;line-height:18px;color:#242424;letter-spacing:0.05px;">A2</div>
<svg class="b" style="left:89.0px;top:193.9px;" width="10" height="6.2" viewBox="0 0 10 6.2"><path d="M1 1 L5.00 5.20 L9.00 1" fill="none" stroke="#333" stroke-width="1.2" stroke-linecap="round" stroke-linejoin="round"/></svg>
<div class="b" style="left:113.6px;top:191.3px;width:2.0px;height:2.0px;background:#3a3a3a;border-radius:1px;"></div>
<div class="b" style="left:113.6px;top:195.8px;width:2.0px;height:2.0px;background:#3a3a3a;border-radius:1px;"></div>
<div class="b" style="left:113.6px;top:200.3px;width:2.0px;height:2.0px;background:#3a3a3a;border-radius:1px;"></div>
<div class="b" style="left:125.0px;top:183.0px;width:74.0px;height:25.5px;background:#fff;border:1px solid #e6e6e6;border-radius:4px;"></div>
<svg class="b" style="left:131.0px;top:190.0px;" width="14" height="14" viewBox="0 0 14 14"><path d="M1.5 1.5 L12.5 12.5 M12.5 1.5 L1.5 12.5" stroke="#b5b5b5" stroke-width="1.1" stroke-linecap="round"/></svg>
<svg class="b" style="left:153.0px;top:190.0px;" width="17" height="14" viewBox="0 0 17 14"><path d="M1.5 7.5 L6 12 L15.5 1.8" fill="none" stroke="#b5b5b5" stroke-width="1.1" stroke-linecap="round" stroke-linejoin="round"/></svg>
<div class="t" style="left:179.5px;top:186.5px;font-size:16.5px;line-height:18px;color:#2a2a2a;letter-spacing:-0.59px;font-weight:bold;font-family:'Liberation Serif',serif;font-style:italic;">fx</div>
<div class="b" style="left:203.0px;top:183.0px;width:1500.0px;height:25.5px;background:#fff;border:1px solid #e6e6e6;border-radius:4px;"></div>
<div class="t" style="left:214.5px;top:187.7px;font-size:13px;line-height:18px;color:#242424;letter-spacing:0.70px;">Government</div>
<div class="b" style="left:18.0px;top:232.0px;width:1660.0px;height:640.0px;background:#fff;"></div>
<div class="b" style="left:0.0px;top:216.0px;width:1667.0px;height:16.0px;background:#efefef;"></div>
<div class="b" style="left:18.0px;top:216.0px;width:54.0px;height:16.0px;background:#dcdcdc;"></div>
<div class="b" style="left:18.0px;top:230.0px;width:54.0px;height:2.0px;background:#1e7145;"></div>
<div class="ch" style="left:18px;width:54px;color:#1e7145">A</div>
<div class="ch" style="left:73px;width:34px;color:#444">B</div>
<div class="ch" style="left:108px;width:31px;color:#444">C</div>
<div class="ch" style="left:140px;width:150px;color:#444">D</div>
<div class="ch" style="left:291px;width:161px;color:#444">E</div>
<div class="ch" style="left:453px;width:233px;color:#444">F</div>
<div class="ch" style="left:687px;width:74px;color:#444">G</div>
<div class="ch" style="left:762px;width:208px;color:#444">H</div>
<div class="ch" style="left:971px;width:74px;color:#444">I</div>
<div class="ch" style="left:1046px;width:104px;color:#444">J</div>
<div class="ch" style="left:1151px;width:68px;color:#444">K</div>
<div class="ch" style="left:1220px;width:109px;color:#444">L</div>
<div class="ch" style="left:1330px;width:68px;color:#444">M</div>
<div class="ch" style="left:1399px;width:101px;color:#444">N</div>
<div class="ch" style="left:1501px;width:98px;color:#444">O</div>
<div class="ch" style="left:1600px;width:44px;color:#444">P</div>
<div class="b" style="left:17.0px;top:217.0px;width:1.0px;height:14.0px;background:#dedede;"></div>
<div class="b" style="left:72.0px;top:217.0px;width:1.0px;height:14.0px;background:#dedede;"></div>
<div class="b" style="left:107.0px;top:217.0px;width:1.0px;height:14.0px;background:#dedede;"></div>
<div class="b" style="left:139.0px;top:217.0px;width:1.0px;height:14.0px;background:#dedede;"></div>
<div class="b" style="left:290.0px;top:217.0px;width:1.0px;height:14.0px;background:#dedede;"></div>
<div class="b" style="left:452.0px;top:217.0px;width:1.0px;height:14.0px;background:#dedede;"></div>
<div class="b" style="left:686.0px;top:217.0px;width:1.0px;height:14.0px;background:#dedede;"></div>
<div class="b" style="left:761.0px;top:217.0px;width:1.0px;height:14.0px;background:#dedede;"></div>
<div class="b" style="left:970.0px;top:217.0px;width:1.0px;height:14.0px;background:#dedede;"></div>
<div class="b" style="left:1045.0px;top:217.0px;width:1.0px;height:14.0px;background:#dedede;"></div>
<div class="b" style="left:1150.0px;top:217.0px;width:1.0px;height:14.0px;background:#dedede;"></div>
<div class="b" style="left:1219.0px;top:217.0px;width:1.0px;height:14.0px;background:#dedede;"></div>
<div class="b" style="left:1329.0px;top:217.0px;width:1.0px;height:14.0px;background:#dedede;"></div>
<div class="b" style="left:1398.0px;top:217.0px;width:1.0px;height:14.0px;background:#dedede;"></div>
<div class="b" style="left:1500.0px;top:217.0px;width:1.0px;height:14.0px;background:#dedede;"></div>
<div class="b" style="left:1599.0px;top:217.0px;width:1.0px;height:14.0px;background:#dedede;"></div>
<div class="b" style="left:1644.0px;top:217.0px;width:1.0px;height:14.0px;background:#dedede;"></div>
<div class="b" style="left:0.0px;top:231.0px;width:1667.0px;height:1.0px;background:#b4b4b4;"></div>
<div class="b" style="left:18.0px;top:231.0px;width:1627.0px;height:1.0px;background:#8ea6c8;"></div>
<div class="b" style="left:18.0px;top:230.0px;width:54.0px;height:2.0px;background:#1e7145;"></div>
<svg class="b" style="left:4.0px;top:219.0px;" width="10" height="10" viewBox="0 0 10 10"><path d="M9 1 V9 H1 Z" fill="#d8d8d8"/></svg>
<div class="b" style="left:0.0px;top:232.0px;width:17.0px;height:640.0px;background:#efefef;"></div>
<div class="b" style="left:0.0px;top:295.0px;width:17.0px;height:17.0px;background:#dcdcdc;"></div>
<div class="rh" style="top:279px">1</div>
<div class="b" style="left:0.0px;top:294.0px;width:17.0px;height:1.0px;background:#d2d2d2;"></div>
<div class="rh" style="top:296px;color:#1e7145;">2</div>
<div class="b" style="left:0.0px;top:311.0px;width:17.0px;height:1.0px;background:#d2d2d2;"></div>
<div class="rh" style="top:313px;">3</div>
<div class="b" style="left:0.0px;top:328.0px;width:17.0px;height:1.0px;background:#d2d2d2;"></div>
<div class="rh" style="top:330px;">4</div>
<div class="b" style="left:0.0px;top:345.0px;width:17.0px;height:1.0px;background:#d2d2d2;"></div>
<div class="rh" style="top:347px;">5</div>
<div class="b" style="left:0.0px;top:362.0px;width:17.0px;height:1.0px;background:#d2d2d2;"></div>
<div class="rh" style="top:431px;">6</div>
<div class="b" style="left:0.0px;top:446.0px;width:17.0px;height:1.0px;background:#d2d2d2;"></div>
<div class="rh" style="top:448px;">7</div>
<div class="b" style="left:0.0px;top:463.0px;width:17.0px;height:1.0px;background:#d2d2d2;"></div>
<div class="rh" style="top:465px;">8</div>
<div class="b" style="left:0.0px;top:480.0px;width:17.0px;height:1.0px;background:#d2d2d2;"></div>
<div class="rh" style="top:482px;">9</div>
<div class="b" style="left:0.0px;top:497.0px;width:17.0px;height:1.0px;background:#d2d2d2;"></div>
<div class="rh" style="top:499px;">10</div>
<div class="b" style="left:0.0px;top:514.0px;width:17.0px;height:1.0px;background:#d2d2d2;"></div>
<div class="rh" style="top:516px;">11</div>
<div class="b" style="left:0.0px;top:531.0px;width:17.0px;height:1.0px;background:#d2d2d2;"></div>
<div class="rh" style="top:533px;">12</div>
<div class="b" style="left:0.0px;top:548.0px;width:17.0px;height:1.0px;background:#d2d2d2;"></div>
<div class="rh" style="top:581px;">13</div>
<div class="b" style="left:0.0px;top:596.0px;width:17.0px;height:1.0px;background:#d2d2d2;"></div>
<div class="rh" style="top:598px;">14</div>
<div class="b" style="left:0.0px;top:613.0px;width:17.0px;height:1.0px;background:#d2d2d2;"></div>
<div class="rh" style="top:615px;">15</div>
<div class="b" style="left:0.0px;top:630.0px;width:17.0px;height:1.0px;background:#d2d2d2;"></div>
<div class="rh" style="top:632px;">16</div>
<div class="b" style="left:0.0px;top:647.0px;width:17.0px;height:1.0px;background:#d2d2d2;"></div>
<div class="rh" style="top:649px;">17</div>
<div class="b" style="left:0.0px;top:664.0px;width:17.0px;height:1.0px;background:#d2d2d2;"></div>
<div class="rh" style="top:666px;">18</div>
<div class="b" style="left:0.0px;top:681.0px;width:17.0px;height:1.0px;background:#d2d2d2;"></div>
<div class="rh" style="top:683px;">19</div>
<div class="b" style="left:0.0px;top:698.0px;width:17.0px;height:1.0px;background:#d2d2d2;"></div>
<div class="rh" style="top:700px;">20</div>
<div class="b" style="left:0.0px;top:715.0px;width:17.0px;height:1.0px;background:#d2d2d2;"></div>
<div class="rh" style="top:717px;">21</div>
<div class="b" style="left:0.0px;top:732.0px;width:17.0px;height:1.0px;background:#d2d2d2;"></div>
<div class="rh" style="top:734px;">22</div>
<div class="b" style="left:0.0px;top:749.0px;width:17.0px;height:1.0px;background:#d2d2d2;"></div>
<div class="rh" style="top:751px;">23</div>
<div class="b" style="left:0.0px;top:766.0px;width:17.0px;height:1.0px;background:#d2d2d2;"></div>
<div class="rh" style="top:768px;">24</div>
<div class="b" style="left:0.0px;top:783.0px;width:17.0px;height:1.0px;background:#d2d2d2;"></div>
<div class="rh" style="top:785px;">25</div>
<div class="b" style="left:0.0px;top:800.0px;width:17.0px;height:1.0px;background:#d2d2d2;"></div>
<div class="rh" style="top:802px;">26</div>
<div class="b" style="left:0.0px;top:817.0px;width:17.0px;height:1.0px;background:#d2d2d2;"></div>
<div class="rh" style="top:819px;">27</div>
<div class="b" style="left:0.0px;top:834.0px;width:17.0px;height:1.0px;background:#d2d2d2;"></div>
<div class="rh" style="top:836px;">28</div>
<div class="b" style="left:0.0px;top:851.0px;width:17.0px;height:1.0px;background:#d2d2d2;"></div>
<div class="rh" style="top:853px;">29</div>
<div class="b" style="left:0.0px;top:868.0px;width:17.0px;height:1.0px;background:#d2d2d2;"></div>
<div class="b" style="left:72.0px;top:295.0px;width:1.0px;height:570.0px;background:#e4e4e4;"></div>
<div class="b" style="left:107.0px;top:295.0px;width:1.0px;height:570.0px;background:#e4e4e4;"></div>
<div class="b" style="left:139.0px;top:295.0px;width:1.0px;height:570.0px;background:#e4e4e4;"></div>
<div class="b" style="left:290.0px;top:295.0px;width:1.0px;height:570.0px;background:#e4e4e4;"></div>
<div class="b" style="left:452.0px;top:295.0px;width:1.0px;height:570.0px;background:#e4e4e4;"></div>
<div class="b" style="left:686.0px;top:295.0px;width:1.0px;height:570.0px;background:#e4e4e4;"></div>
<div class="b" style="left:761.0px;top:295.0px;width:1.0px;height:570.0px;background:#e4e4e4;"></div>
<div class="b" style="left:970.0px;top:295.0px;width:1.0px;height:570.0px;background:#e4e4e4;"></div>
<div class="b" style="left:1045.0px;top:295.0px;width:1.0px;height:570.0px;background:#e4e4e4;"></div>
<div class="b" style="left:1150.0px;top:295.0px;width:1.0px;height:570.0px;background:#e4e4e4;"></div>
<div class="b" style="left:1219.0px;top:295.0px;width:1.0px;height:570.0px;background:#e4e4e4;"></div>
<div class="b" style="left:1329.0px;top:295.0px;width:1.0px;height:570.0px;background:#e4e4e4;"></div>
<div class="b" style="left:1398.0px;top:295.0px;width:1.0px;height:570.0px;background:#e4e4e4;"></div>
<div class="b" style="left:1500.0px;top:295.0px;width:1.0px;height:570.0px;background:#e4e4e4;"></div>
<div class="b" style="left:1599.0px;top:295.0px;width:1.0px;height:570.0px;background:#e4e4e4;"></div>
<div class="b" style="left:1645.0px;top:311.0px;width:30.0px;height:1.0px;background:#e4e4e4;"></div>
<div class="b" style="left:1645.0px;top:328.0px;width:30.0px;height:1.0px;background:#e4e4e4;"></div>
<div class="b" style="left:1645.0px;top:345.0px;width:30.0px;height:1.0px;background:#e4e4e4;"></div>
<div class="b" style="left:1645.0px;top:362.0px;width:30.0px;height:1.0px;background:#e4e4e4;"></div>
<div class="b" style="left:1645.0px;top:446.0px;width:30.0px;height:1.0px;background:#e4e4e4;"></div>
<div class="b" style="left:1645.0px;top:463.0px;width:30.0px;height:1.0px;background:#e4e4e4;"></div>
<div class="b" style="left:1645.0px;top:480.0px;width:30.0px;height:1.0px;background:#e4e4e4;"></div>
<div class="b" style="left:1645.0px;top:497.0px;width:30.0px;height:1.0px;background:#e4e4e4;"></div>
<div class="b" style="left:1645.0px;top:514.0px;width:30.0px;height:1.0px;background:#e4e4e4;"></div>
<div class="b" style="left:1645.0px;top:531.0px;width:30.0px;height:1.0px;background:#e4e4e4;"></div>
<div class="b" style="left:1645.0px;top:548.0px;width:30.0px;height:1.0px;background:#e4e4e4;"></div>
<div class="b" style="left:1645.0px;top:596.0px;width:30.0px;height:1.0px;background:#e4e4e4;"></div>
<div class="b" style="left:1645.0px;top:613.0px;width:30.0px;height:1.0px;background:#e4e4e4;"></div>
<div class="b" style="left:1645.0px;top:630.0px;width:30.0px;height:1.0px;background:#e4e4e4;"></div>
<div class="b" style="left:1645.0px;top:647.0px;width:30.0px;height:1.0px;background:#e4e4e4;"></div>
<div class="b" style="left:1645.0px;top:664.0px;width:30.0px;height:1.0px;background:#e4e4e4;"></div>
<div class="b" style="left:1645.0px;top:681.0px;width:30.0px;height:1.0px;background:#e4e4e4;"></div>
<div class="b" style="left:1645.0px;top:698.0px;width:30.0px;height:1.0px;background:#e4e4e4;"></div>
<div class="b" style="left:1645.0px;top:715.0px;width:30.0px;height:1.0px;background:#e4e4e4;"></div>
<div class="b" style="left:1645.0px;top:732.0px;width:30.0px;height:1.0px;background:#e4e4e4;"></div>
<div class="b" style="left:1645.0px;top:749.0px;width:30.0px;height:1.0px;background:#e4e4e4;"></div>
<div class="b" style="left:1645.0px;top:766.0px;width:30.0px;height:1.0px;background:#e4e4e4;"></div>
<div class="b" style="left:1645.0px;top:783.0px;width:30.0px;height:1.0px;background:#e4e4e4;"></div>
<div class="b" style="left:1645.0px;top:800.0px;width:30.0px;height:1.0px;background:#e4e4e4;"></div>
<div class="b" style="left:1645.0px;top:817.0px;width:30.0px;height:1.0px;background:#e4e4e4;"></div>
<div class="b" style="left:1645.0px;top:834.0px;width:30.0px;height:1.0px;background:#e4e4e4;"></div>
<div class="b" style="left:1645.0px;top:851.0px;width:30.0px;height:1.0px;background:#e4e4e4;"></div>
<div class="b" style="left:1645.0px;top:868.0px;width:30.0px;height:1.0px;background:#e4e4e4;"></div>
<div class="b" style="left:1645.0px;top:294.0px;width:30.0px;height:1.0px;background:#e4e4e4;"></div>
<div class="b" style="left:17.0px;top:232.0px;width:1628.0px;height:63.0px;background:#689dd6;"></div>
<div class="b" style="left:17.0px;top:295.0px;width:1.0px;height:640.0px;background:#9db0cb;"></div>
<div class="b" style="left:1644.0px;top:232.0px;width:1.0px;height:640.0px;background:#8ba0c2;"></div>
<div class="h" style="left:20.3px;top:279px;width:35.7px">Segment</div>
<div class="fb" style="left:55px;top:277px"></div>
<div class="h" style="left:75.2px;top:279px;width:15.8px">Country</div>
<div class="fb" style="left:90px;top:277px"></div>
<div class="h" style="left:114.3px;top:279px;width:8.7px">Product</div>
<div class="fb" style="left:122px;top:277px"></div>
<div class="h" style="left:146.3px;top:279px;width:127.7px">Discount Band</div>
<div class="fb" style="left:273px;top:277px"></div>
<div class="h" style="left:293.3px;top:279px;width:142.7px">Units Sold</div>
<div class="fb" style="left:435px;top:277px"></div>
<div class="h" style="left:459.0px;top:279px;width:211.0px">Manufacturing Price</div>
<div class="fb" style="left:669px;top:277px"></div>
<div class="h" style="left:693.0px;top:279px;width:52.0px">Sale Price</div>
<div class="fb" style="left:744px;top:277px"></div>
<div class="h" style="left:768.0px;top:279px;width:186.0px">Gross Sales</div>
<div class="fb" style="left:953px;top:277px"></div>
<div class="h" style="left:977.0px;top:279px;width:52.0px">Discounts</div>
<div class="fb" style="left:1028px;top:277px"></div>
<div class="h" style="left:1054.6px;top:279px;width:79.4px">Sales</div>
<div class="fb" style="left:1133px;top:277px"></div>
<div class="h" style="left:1157.0px;top:279px;width:46.0px">COGS</div>
<div class="fb" style="left:1202px;top:277px"></div>
<div class="h" style="left:1226.0px;top:279px;width:87.0px">Profit</div>
<div class="fb" style="left:1312px;top:277px"></div>
<div class="h" style="left:1332.6px;top:279px;width:49.4px">Date</div>
<div class="fb" style="left:1381px;top:277px"></div>
<div class="h" style="left:1401.0px;top:279px;width:83.0px">Month Number</div>
<div class="fb" style="left:1483px;top:277px"></div>
<div class="h" style="left:1507.0px;top:279px;width:76.0px">Month Name</div>
<div class="fb" style="left:1582px;top:277px"></div>
<div class="h" style="left:1601.8px;top:279px;width:26.2px">Year</div>
<div class="fb" style="left:1627px;top:277px"></div>
<div class="b" style="left:18.0px;top:311.0px;width:1627.0px;height:1.0px;background:#8ba0c2;"></div>
<div class="c x" style="left:20.3px;top:296px;width:51.7px">Government</div>
<div class="c x" style="left:75.2px;top:296px;width:31.8px">Canada</div>
<div class="c x" style="left:114.3px;top:296px;width:24.7px">Carretera</div>
<div class="c x" style="left:146.3px;top:296px;width:143.7px">None</div>
<div class="c r" style="left:291px;top:296px;width:159.0px">1618.5</div>
<div class="c" style="left:458.8px;top:296px;width:8px">$</div>
<div class="c r" style="left:465px;top:296px;width:215.1px">3.00</div>
<div class="c" style="left:692.8px;top:296px;width:8px">$</div>
<div class="c r" style="left:699px;top:296px;width:56.1px">20.00</div>
<div class="c" style="left:767.8px;top:296px;width:8px">$</div>
<div class="c r" style="left:774px;top:296px;width:190.1px">32,370.00</div>
<div class="c" style="left:976.8px;top:296px;width:8px">$</div>
<div class="c r" style="left:983px;top:296px;width:43.0px">-</div>
<div class="c" style="left:1051.8px;top:296px;width:8px">$</div>
<div class="c r" style="left:1058px;top:296px;width:86.1px">32,370.00</div>
<div class="c" style="left:1156.8px;top:296px;width:8px">$</div>
<div class="c r" style="left:1163px;top:296px;width:50.1px">16,185.00</div>
<div class="c" style="left:1225.8px;top:296px;width:8px">$</div>
<div class="c r" style="left:1232px;top:296px;width:91.1px">16,185.00</div>
<div class="c r" style="left:1330px;top:296px;width:65.6px">01-01-2014</div>
<div class="c r" style="left:1399px;top:296px;width:98.4px">1</div>
<div class="c x" style="left:1506.8px;top:296px;width:92.2px">January</div>
<div class="c" style="left:1602.2px;top:296px;width:41.8px">2014</div>
<div class="gt" style="left:1600px;top:295px"></div>
<div class="b" style="left:18.0px;top:328.0px;width:1627.0px;height:1.0px;background:#8ba0c2;"></div>
<div class="c x" style="left:20.3px;top:313px;width:51.7px">Government</div>
<div class="c x" style="left:75.2px;top:313px;width:31.8px">Germany</div>
<div class="c x" style="left:114.3px;top:313px;width:24.7px">Carretera</div>
<div class="c x" style="left:146.3px;top:313px;width:143.7px">None</div>
<div class="c r" style="left:291px;top:313px;width:159.0px">1321</div>
<div class="c" style="left:458.8px;top:313px;width:8px">$</div>
<div class="c r" style="left:465px;top:313px;width:215.1px">3.00</div>
<div class="c" style="left:692.8px;top:313px;width:8px">$</div>
<div class="c r" style="left:699px;top:313px;width:56.1px">20.00</div>
<div class="c" style="left:767.8px;top:313px;width:8px">$</div>
<div class="c r" style="left:774px;top:313px;width:190.1px">26,420.00</div>
<div class="c" style="left:976.8px;top:313px;width:8px">$</div>
<div class="c r" style="left:983px;top:313px;width:43.0px">-</div>
<div class="c" style="left:1051.8px;top:313px;width:8px">$</div>
<div class="c r" style="left:1058px;top:313px;width:86.1px">26,420.00</div>
<div class="c" style="left:1156.8px;top:313px;width:8px">$</div>
<div class="c r" style="left:1163px;top:313px;width:50.1px">13,210.00</div>
<div class="c" style="left:1225.8px;top:313px;width:8px">$</div>
<div class="c r" style="left:1232px;top:313px;width:91.1px">13,210.00</div>
<div class="c r" style="left:1330px;top:313px;width:65.6px">01-01-2014</div>
<div class="c r" style="left:1399px;top:313px;width:98.4px">1</div>
<div class="c x" style="left:1506.8px;top:313px;width:92.2px">January</div>
<div class="c" style="left:1602.2px;top:313px;width:41.8px">2014</div>
<div class="gt" style="left:1600px;top:312px"></div>
<div class="b" style="left:18.0px;top:345.0px;width:1627.0px;height:1.0px;background:#8ba0c2;"></div>
<div class="c x" style="left:20.3px;top:330px;width:51.7px">Midmarket</div>
<div class="c x" style="left:75.2px;top:330px;width:31.8px">France</div>
<div class="c x" style="left:114.3px;top:330px;width:24.7px">Carretera</div>
<div class="c x" style="left:146.3px;top:330px;width:143.7px">None</div>
<div class="c r" style="left:291px;top:330px;width:159.0px">2178</div>
<div class="c" style="left:458.8px;top:330px;width:8px">$</div>
<div class="c r" style="left:465px;top:330px;width:215.1px">3.00</div>
<div class="c" style="left:692.8px;top:330px;width:8px">$</div>
<div class="c r" style="left:699px;top:330px;width:56.1px">15.00</div>
<div class="c" style="left:767.8px;top:330px;width:8px">$</div>
<div class="c r" style="left:774px;top:330px;width:190.1px">32,670.00</div>
<div class="c" style="left:976.8px;top:330px;width:8px">$</div>
<div class="c r" style="left:983px;top:330px;width:43.0px">-</div>
<div class="c" style="left:1051.8px;top:330px;width:8px">$</div>
<div class="c r" style="left:1058px;top:330px;width:86.1px">32,670.00</div>
<div class="c" style="left:1156.8px;top:330px;width:8px">$</div>
<div class="c r" style="left:1163px;top:330px;width:50.1px">21,780.00</div>
<div class="c" style="left:1225.8px;top:330px;width:8px">$</div>
<div class="c r" style="left:1232px;top:330px;width:91.1px">10,890.00</div>
<div class="c r" style="left:1330px;top:330px;width:65.6px">01-06-2014</div>
<div class="c r" style="left:1399px;top:330px;width:98.4px">6</div>
<div class="c x" style="left:1506.8px;top:330px;width:92.2px">June</div>
<div class="c" style="left:1602.2px;top:330px;width:41.8px">2014</div>
<div class="gt" style="left:1600px;top:329px"></div>
<div class="b" style="left:18.0px;top:362.0px;width:1627.0px;height:1.0px;background:#8ba0c2;"></div>
<div class="c x" style="left:20.3px;top:347px;width:51.7px">Midmarket</div>
<div class="c x" style="left:75.2px;top:347px;width:31.8px">Germany</div>
<div class="c x" style="left:114.3px;top:347px;width:24.7px">Carretera</div>
<div class="c x" style="left:146.3px;top:347px;width:143.7px">None</div>
<div class="c r" style="left:291px;top:347px;width:159.0px">888</div>
<div class="c" style="left:458.8px;top:347px;width:8px">$</div>
<div class="c r" style="left:465px;top:347px;width:215.1px">3.00</div>
<div class="c" style="left:692.8px;top:347px;width:8px">$</div>
<div class="c r" style="left:699px;top:347px;width:56.1px">15.00</div>
<div class="c" style="left:767.8px;top:347px;width:8px">$</div>
<div class="c r" style="left:774px;top:347px;width:190.1px">13,320.00</div>
<div class="c" style="left:976.8px;top:347px;width:8px">$</div>
<div class="c r" style="left:983px;top:347px;width:43.0px">-</div>
<div class="c" style="left:1051.8px;top:347px;width:8px">$</div>
<div class="c r" style="left:1058px;top:347px;width:86.1px">13,320.00</div>
<div class="c" style="left:1156.8px;top:347px;width:8px">$</div>
<div class="c r" style="left:1163px;top:347px;width:50.1px">8,880.00</div>
<div class="c" style="left:1225.8px;top:347px;width:8px">$</div>
<div class="c r" style="left:1232px;top:347px;width:91.1px">4,440.00</div>
<div class="c r" style="left:1330px;top:347px;width:65.6px">01-06-2014</div>
<div class="c r" style="left:1399px;top:347px;width:98.4px">6</div>
<div class="c x" style="left:1506.8px;top:347px;width:92.2px">June</div>
<div class="c" style="left:1602.2px;top:347px;width:41.8px">2014</div>
<div class="gt" style="left:1600px;top:346px"></div>
<div class="b" style="left:18.0px;top:446.0px;width:1627.0px;height:1.0px;background:#8ba0c2;"></div>
<div class="c x" style="left:20.3px;top:431px;width:51.7px">Midmarket</div>
<div class="c x" style="left:75.2px;top:431px;width:31.8px">Mexico</div>
<div class="c x" style="left:114.3px;top:431px;width:24.7px">Carretera</div>
<div class="c x" style="left:146.3px;top:431px;width:143.7px">None</div>
<div class="c r" style="left:291px;top:431px;width:159.0px">2470</div>
<div class="c" style="left:458.8px;top:431px;width:8px">$</div>
<div class="c r" style="left:465px;top:431px;width:215.1px">3.00</div>
<div class="c" style="left:692.8px;top:431px;width:8px">$</div>
<div class="c r" style="left:699px;top:431px;width:56.1px">15.00</div>
<div class="c" style="left:767.8px;top:431px;width:8px">$</div>
<div class="c r" style="left:774px;top:431px;width:190.1px">37,050.00</div>
<div class="c" style="left:976.8px;top:431px;width:8px">$</div>
<div class="c r" style="left:983px;top:431px;width:43.0px">-</div>
<div class="c" style="left:1051.8px;top:431px;width:8px">$</div>
<div class="c r" style="left:1058px;top:431px;width:86.1px">37,050.00</div>
<div class="c" style="left:1156.8px;top:431px;width:8px">$</div>
<div class="c r" style="left:1163px;top:431px;width:50.1px">24,700.00</div>
<div class="c" style="left:1225.8px;top:431px;width:8px">$</div>
<div class="c r" style="left:1232px;top:431px;width:91.1px">12,350.00</div>
<div class="c r" style="left:1330px;top:431px;width:65.6px">01-06-2014</div>
<div class="c r" style="left:1399px;top:431px;width:98.4px">6</div>
<div class="c x" style="left:1506.8px;top:431px;width:92.2px">June</div>
<div class="c" style="left:1602.2px;top:431px;width:41.8px">2014</div>
<div class="gt" style="left:1600px;top:363px"></div>
<div class="b" style="left:18.0px;top:463.0px;width:1627.0px;height:1.0px;background:#8ba0c2;"></div>
<div class="c x" style="left:20.3px;top:448px;width:51.7px">Government</div>
<div class="c x" style="left:75.2px;top:448px;width:31.8px">Germany</div>
<div class="c x" style="left:114.3px;top:448px;width:24.7px">Carretera</div>
<div class="c x" style="left:146.3px;top:448px;width:143.7px">None</div>
<div class="c r" style="left:291px;top:448px;width:159.0px">1513</div>
<div class="c" style="left:458.8px;top:448px;width:8px">$</div>
<div class="c r" style="left:465px;top:448px;width:215.1px">3.00</div>
<div class="c" style="left:692.8px;top:448px;width:8px">$</div>
<div class="c r" style="left:699px;top:448px;width:56.1px">350.00</div>
<div class="c" style="left:767.8px;top:448px;width:8px">$</div>
<div class="c r" style="left:774px;top:448px;width:190.1px">5,29,550.00</div>
<div class="c" style="left:976.8px;top:448px;width:8px">$</div>
<div class="c r" style="left:983px;top:448px;width:43.0px">-</div>
<div class="c" style="left:1051.8px;top:448px;width:8px">$</div>
<div class="c r" style="left:1058px;top:448px;width:86.1px">5,29,550.00</div>
<div class="c r" style="left:1151px;top:448px;width:64.5px">#########</div>
<div class="c" style="left:1225.8px;top:448px;width:8px">$</div>
<div class="c r" style="left:1232px;top:448px;width:91.1px">1,36,170.00</div>
<div class="c r" style="left:1330px;top:448px;width:65.6px">01-12-2014</div>
<div class="c r" style="left:1399px;top:448px;width:98.4px">12</div>
<div class="c x" style="left:1506.8px;top:448px;width:92.2px">December</div>
<div class="c" style="left:1602.2px;top:448px;width:41.8px">2014</div>
<div class="gt" style="left:1600px;top:447px"></div>
<div class="b" style="left:18.0px;top:480.0px;width:1627.0px;height:1.0px;background:#8ba0c2;"></div>
<div class="c x" style="left:20.3px;top:465px;width:51.7px">Midmarket</div>
<div class="c x" style="left:75.2px;top:465px;width:31.8px">Germany</div>
<div class="c x" style="left:114.3px;top:465px;width:24.7px">Montana</div>
<div class="c x" style="left:146.3px;top:465px;width:143.7px">None</div>
<div class="c r" style="left:291px;top:465px;width:159.0px">921</div>
<div class="c" style="left:458.8px;top:465px;width:8px">$</div>
<div class="c r" style="left:465px;top:465px;width:215.1px">5.00</div>
<div class="c" style="left:692.8px;top:465px;width:8px">$</div>
<div class="c r" style="left:699px;top:465px;width:56.1px">15.00</div>
<div class="c" style="left:767.8px;top:465px;width:8px">$</div>
<div class="c r" style="left:774px;top:465px;width:190.1px">13,815.00</div>
<div class="c" style="left:976.8px;top:465px;width:8px">$</div>
<div class="c r" style="left:983px;top:465px;width:43.0px">-</div>
<div class="c" style="left:1051.8px;top:465px;width:8px">$</div>
<div class="c r" style="left:1058px;top:465px;width:86.1px">13,815.00</div>
<div class="c" style="left:1156.8px;top:465px;width:8px">$</div>
<div class="c r" style="left:1163px;top:465px;width:50.1px">9,210.00</div>
<div class="c" style="left:1225.8px;top:465px;width:8px">$</div>
<div class="c r" style="left:1232px;top:465px;width:91.1px">4,605.00</div>
<div class="c r" style="left:1330px;top:465px;width:65.6px">01-03-2014</div>
<div class="c r" style="left:1399px;top:465px;width:98.4px">3</div>
<div class="c x" style="left:1506.8px;top:465px;width:92.2px">March</div>
<div class="c" style="left:1602.2px;top:465px;width:41.8px">2014</div>
<div class="gt" style="left:1600px;top:464px"></div>
<div class="b" style="left:18.0px;top:497.0px;width:1627.0px;height:1.0px;background:#8ba0c2;"></div>
<div class="c x" style="left:20.3px;top:482px;width:51.7px">Channel Partners</div>
<div class="c x" style="left:75.2px;top:482px;width:31.8px">Canada</div>
<div class="c x" style="left:114.3px;top:482px;width:24.7px">Montana</div>
<div class="c x" style="left:146.3px;top:482px;width:143.7px">None</div>
<div class="c r" style="left:291px;top:482px;width:159.0px">2518</div>
<div class="c" style="left:458.8px;top:482px;width:8px">$</div>
<div class="c r" style="left:465px;top:482px;width:215.1px">5.00</div>
<div class="c" style="left:692.8px;top:482px;width:8px">$</div>
<div class="c r" style="left:699px;top:482px;width:56.1px">12.00</div>
<div class="c" style="left:767.8px;top:482px;width:8px">$</div>
<div class="c r" style="left:774px;top:482px;width:190.1px">30,216.00</div>
<div class="c" style="left:976.8px;top:482px;width:8px">$</div>
<div class="c r" style="left:983px;top:482px;width:43.0px">-</div>
<div class="c" style="left:1051.8px;top:482px;width:8px">$</div>
<div class="c r" style="left:1058px;top:482px;width:86.1px">30,216.00</div>
<div class="c" style="left:1156.8px;top:482px;width:8px">$</div>
<div class="c r" style="left:1163px;top:482px;width:50.1px">7,554.00</div>
<div class="c" style="left:1225.8px;top:482px;width:8px">$</div>
<div class="c r" style="left:1232px;top:482px;width:91.1px">22,662.00</div>
<div class="c r" style="left:1330px;top:482px;width:65.6px">01-06-2014</div>
<div class="c r" style="left:1399px;top:482px;width:98.4px">6</div>
<div class="c x" style="left:1506.8px;top:482px;width:92.2px">June</div>
<div class="c" style="left:1602.2px;top:482px;width:41.8px">2014</div>
<div class="gt" style="left:1600px;top:481px"></div>
<div class="b" style="left:18.0px;top:514.0px;width:1627.0px;height:1.0px;background:#8ba0c2;"></div>
<div class="c x" style="left:20.3px;top:499px;width:51.7px">Government</div>
<div class="c x" style="left:75.2px;top:499px;width:31.8px">France</div>
<div class="c x" style="left:114.3px;top:499px;width:24.7px">Montana</div>
<div class="c x" style="left:146.3px;top:499px;width:143.7px">None</div>
<div class="c r" style="left:291px;top:499px;width:159.0px">1899</div>
<div class="c" style="left:458.8px;top:499px;width:8px">$</div>
<div class="c r" style="left:465px;top:499px;width:215.1px">5.00</div>
<div class="c" style="left:692.8px;top:499px;width:8px">$</div>
<div class="c r" style="left:699px;top:499px;width:56.1px">20.00</div>
<div class="c" style="left:767.8px;top:499px;width:8px">$</div>
<div class="c r" style="left:774px;top:499px;width:190.1px">37,980.00</div>
<div class="c" style="left:976.8px;top:499px;width:8px">$</div>
<div class="c r" style="left:983px;top:499px;width:43.0px">-</div>
<div class="c" style="left:1051.8px;top:499px;width:8px">$</div>
<div class="c r" style="left:1058px;top:499px;width:86.1px">37,980.00</div>
<div class="c" style="left:1156.8px;top:499px;width:8px">$</div>
<div class="c r" style="left:1163px;top:499px;width:50.1px">18,990.00</div>
<div class="c" style="left:1225.8px;top:499px;width:8px">$</div>
<div class="c r" style="left:1232px;top:499px;width:91.1px">18,990.00</div>
<div class="c r" style="left:1330px;top:499px;width:65.6px">01-06-2014</div>
<div class="c r" style="left:1399px;top:499px;width:98.4px">6</div>
<div class="c x" style="left:1506.8px;top:499px;width:92.2px">June</div>
<div class="c" style="left:1602.2px;top:499px;width:41.8px">2014</div>
<div class="gt" style="left:1600px;top:498px"></div>
<div class="b" style="left:18.0px;top:531.0px;width:1627.0px;height:1.0px;background:#8ba0c2;"></div>
<div class="c x" style="left:20.3px;top:516px;width:51.7px">Channel Partners</div>
<div class="c x" style="left:75.2px;top:516px;width:31.8px">Germany</div>
<div class="c x" style="left:114.3px;top:516px;width:24.7px">Montana</div>
<div class="c x" style="left:146.3px;top:516px;width:143.7px">None</div>
<div class="c r" style="left:291px;top:516px;width:159.0px">1545</div>
<div class="c" style="left:458.8px;top:516px;width:8px">$</div>
<div class="c r" style="left:465px;top:516px;width:215.1px">5.00</div>
<div class="c" style="left:692.8px;top:516px;width:8px">$</div>
<div class="c r" style="left:699px;top:516px;width:56.1px">12.00</div>
<div class="c" style="left:767.8px;top:516px;width:8px">$</div>
<div class="c r" style="left:774px;top:516px;width:190.1px">18,540.00</div>
<div class="c" style="left:976.8px;top:516px;width:8px">$</div>
<div class="c r" style="left:983px;top:516px;width:43.0px">-</div>
<div class="c" style="left:1051.8px;top:516px;width:8px">$</div>
<div class="c r" style="left:1058px;top:516px;width:86.1px">18,540.00</div>
<div class="c" style="left:1156.8px;top:516px;width:8px">$</div>
<div class="c r" style="left:1163px;top:516px;width:50.1px">4,635.00</div>
<div class="c" style="left:1225.8px;top:516px;width:8px">$</div>
<div class="c r" style="left:1232px;top:516px;width:91.1px">13,905.00</div>
<div class="c r" style="left:1330px;top:516px;width:65.6px">01-06-2014</div>
<div class="c r" style="left:1399px;top:516px;width:98.4px">6</div>
<div class="c x" style="left:1506.8px;top:516px;width:92.2px">June</div>
<div class="c" style="left:1602.2px;top:516px;width:41.8px">2014</div>
<div class="gt" style="left:1600px;top:515px"></div>
<div class="b" style="left:18.0px;top:548.0px;width:1627.0px;height:1.0px;background:#8ba0c2;"></div>
<div class="c x" style="left:20.3px;top:533px;width:51.7px">Midmarket</div>
<div class="c x" style="left:75.2px;top:533px;width:31.8px">Mexico</div>
<div class="c x" style="left:114.3px;top:533px;width:24.7px">Montana</div>
<div class="c x" style="left:146.3px;top:533px;width:143.7px">None</div>
<div class="c r" style="left:291px;top:533px;width:159.0px">2470</div>
<div class="c" style="left:458.8px;top:533px;width:8px">$</div>
<div class="c r" style="left:465px;top:533px;width:215.1px">5.00</div>
<div class="c" style="left:692.8px;top:533px;width:8px">$</div>
<div class="c r" style="left:699px;top:533px;width:56.1px">15.00</div>
<div class="c" style="left:767.8px;top:533px;width:8px">$</div>
<div class="c r" style="left:774px;top:533px;width:190.1px">37,050.00</div>
<div class="c" style="left:976.8px;top:533px;width:8px">$</div>
<div class="c r" style="left:983px;top:533px;width:43.0px">-</div>
<div class="c" style="left:1051.8px;top:533px;width:8px">$</div>
<div class="c r" style="left:1058px;top:533px;width:86.1px">37,050.00</div>
<div class="c" style="left:1156.8px;top:533px;width:8px">$</div>
<div class="c r" style="left:1163px;top:533px;width:50.1px">24,700.00</div>
<div class="c" style="left:1225.8px;top:533px;width:8px">$</div>
<div class="c r" style="left:1232px;top:533px;width:91.1px">12,350.00</div>
<div class="c r" style="left:1330px;top:533px;width:65.6px">01-06-2014</div>
<div class="c r" style="left:1399px;top:533px;width:98.4px">6</div>
<div class="c x" style="left:1506.8px;top:533px;width:92.2px">June</div>
<div class="c" style="left:1602.2px;top:533px;width:41.8px">2014</div>
<div class="gt" style="left:1600px;top:532px"></div>
<div class="b" style="left:18.0px;top:596.0px;width:1627.0px;height:1.0px;background:#8ba0c2;"></div>
<div class="c x" style="left:20.3px;top:581px;width:51.7px">Enterprise</div>
<div class="c x" style="left:75.2px;top:581px;width:31.8px">Canada</div>
<div class="c x" style="left:114.3px;top:581px;width:24.7px">Montana</div>
<div class="c x" style="left:146.3px;top:581px;width:143.7px">None</div>
<div class="c r" style="left:291px;top:581px;width:159.0px">2665.5</div>
<div class="c" style="left:458.8px;top:581px;width:8px">$</div>
<div class="c r" style="left:465px;top:581px;width:215.1px">5.00</div>
<div class="c" style="left:692.8px;top:581px;width:8px">$</div>
<div class="c r" style="left:699px;top:581px;width:56.1px">125.00</div>
<div class="c" style="left:767.8px;top:581px;width:8px">$</div>
<div class="c r" style="left:774px;top:581px;width:190.1px">3,33,187.50</div>
<div class="c" style="left:976.8px;top:581px;width:8px">$</div>
<div class="c r" style="left:983px;top:581px;width:43.0px">-</div>
<div class="c" style="left:1051.8px;top:581px;width:8px">$</div>
<div class="c r" style="left:1058px;top:581px;width:86.1px">3,33,187.50</div>
<div class="c r" style="left:1151px;top:581px;width:64.5px">#########</div>
<div class="c" style="left:1225.8px;top:581px;width:8px">$</div>
<div class="c r" style="left:1232px;top:581px;width:91.1px">13,327.50</div>
<div class="c r" style="left:1330px;top:581px;width:65.6px">01-07-2014</div>
<div class="c r" style="left:1399px;top:581px;width:98.4px">7</div>
<div class="c x" style="left:1506.8px;top:581px;width:92.2px">July</div>
<div class="c" style="left:1602.2px;top:581px;width:41.8px">2014</div>
<div class="gt" style="left:1600px;top:549px"></div>
<div class="b" style="left:18.0px;top:613.0px;width:1627.0px;height:1.0px;background:#8ba0c2;"></div>
<div class="c x" style="left:20.3px;top:598px;width:51.7px">Small Business</div>
<div class="c x" style="left:75.2px;top:598px;width:31.8px">Mexico</div>
<div class="c x" style="left:114.3px;top:598px;width:24.7px">Montana</div>
<div class="c x" style="left:146.3px;top:598px;width:143.7px">None</div>
<div class="c r" style="left:291px;top:598px;width:159.0px">958</div>
<div class="c" style="left:458.8px;top:598px;width:8px">$</div>
<div class="c r" style="left:465px;top:598px;width:215.1px">5.00</div>
<div class="c" style="left:692.8px;top:598px;width:8px">$</div>
<div class="c r" style="left:699px;top:598px;width:56.1px">300.00</div>
<div class="c" style="left:767.8px;top:598px;width:8px">$</div>
<div class="c r" style="left:774px;top:598px;width:190.1px">2,87,400.00</div>
<div class="c" style="left:976.8px;top:598px;width:8px">$</div>
<div class="c r" style="left:983px;top:598px;width:43.0px">-</div>
<div class="c" style="left:1051.8px;top:598px;width:8px">$</div>
<div class="c r" style="left:1058px;top:598px;width:86.1px">2,87,400.00</div>
<div class="c r" style="left:1151px;top:598px;width:64.5px">#########</div>
<div class="c" style="left:1225.8px;top:598px;width:8px">$</div>
<div class="c r" style="left:1232px;top:598px;width:91.1px">47,900.00</div>
<div class="c r" style="left:1330px;top:598px;width:65.6px">01-08-2014</div>
<div class="c r" style="left:1399px;top:598px;width:98.4px">8</div>
<div class="c x" style="left:1506.8px;top:598px;width:92.2px">August</div>
<div class="c" style="left:1602.2px;top:598px;width:41.8px">2014</div>
<div class="gt" style="left:1600px;top:597px"></div>
<div class="b" style="left:18.0px;top:630.0px;width:1627.0px;height:1.0px;background:#8ba0c2;"></div>
<div class="c x" style="left:20.3px;top:615px;width:51.7px">Government</div>
<div class="c x" style="left:75.2px;top:615px;width:31.8px">Germany</div>
<div class="c x" style="left:114.3px;top:615px;width:24.7px">Montana</div>
<div class="c x" style="left:146.3px;top:615px;width:143.7px">None</div>
<div class="c r" style="left:291px;top:615px;width:159.0px">2146</div>
<div class="c" style="left:458.8px;top:615px;width:8px">$</div>
<div class="c r" style="left:465px;top:615px;width:215.1px">5.00</div>
<div class="c" style="left:692.8px;top:615px;width:8px">$</div>
<div class="c r" style="left:699px;top:615px;width:56.1px">7.00</div>
<div class="c" style="left:767.8px;top:615px;width:8px">$</div>
<div class="c r" style="left:774px;top:615px;width:190.1px">15,022.00</div>
<div class="c" style="left:976.8px;top:615px;width:8px">$</div>
<div class="c r" style="left:983px;top:615px;width:43.0px">-</div>
<div class="c" style="left:1051.8px;top:615px;width:8px">$</div>
<div class="c r" style="left:1058px;top:615px;width:86.1px">15,022.00</div>
<div class="c" style="left:1156.8px;top:615px;width:8px">$</div>
<div class="c r" style="left:1163px;top:615px;width:50.1px">10,730.00</div>
<div class="c" style="left:1225.8px;top:615px;width:8px">$</div>
<div class="c r" style="left:1232px;top:615px;width:91.1px">4,292.00</div>
<div class="c r" style="left:1330px;top:615px;width:65.6px">01-09-2014</div>
<div class="c r" style="left:1399px;top:615px;width:98.4px">9</div>
<div class="c x" style="left:1506.8px;top:615px;width:92.2px">September</div>
<div class="c" style="left:1602.2px;top:615px;width:41.8px">2014</div>
<div class="gt" style="left:1600px;top:614px"></div>
<div class="b" style="left:18.0px;top:647.0px;width:1627.0px;height:1.0px;background:#8ba0c2;"></div>
<div class="c x" style="left:20.3px;top:632px;width:51.7px">Enterprise</div>
<div class="c x" style="left:75.2px;top:632px;width:31.8px">Canada</div>
<div class="c x" style="left:114.3px;top:632px;width:24.7px">Montana</div>
<div class="c x" style="left:146.3px;top:632px;width:143.7px">None</div>
<div class="c r" style="left:291px;top:632px;width:159.0px">345</div>
<div class="c" style="left:458.8px;top:632px;width:8px">$</div>
<div class="c r" style="left:465px;top:632px;width:215.1px">5.00</div>
<div class="c" style="left:692.8px;top:632px;width:8px">$</div>
<div class="c r" style="left:699px;top:632px;width:56.1px">125.00</div>
<div class="c" style="left:767.8px;top:632px;width:8px">$</div>
<div class="c r" style="left:774px;top:632px;width:190.1px">43,125.00</div>
<div class="c" style="left:976.8px;top:632px;width:8px">$</div>
<div class="c r" style="left:983px;top:632px;width:43.0px">-</div>
<div class="c" style="left:1051.8px;top:632px;width:8px">$</div>
<div class="c r" style="left:1058px;top:632px;width:86.1px">43,125.00</div>
<div class="c" style="left:1156.8px;top:632px;width:8px">$</div>
<div class="c r" style="left:1163px;top:632px;width:50.1px">41,400.00</div>
<div class="c" style="left:1225.8px;top:632px;width:8px">$</div>
<div class="c r" style="left:1232px;top:632px;width:91.1px">1,725.00</div>
<div class="c r" style="left:1330px;top:632px;width:65.6px">01-10-2013</div>
<div class="c r" style="left:1399px;top:632px;width:98.4px">10</div>
<div class="c x" style="left:1506.8px;top:632px;width:92.2px">October</div>
<div class="c" style="left:1602.2px;top:632px;width:41.8px">2013</div>
<div class="gt" style="left:1600px;top:631px"></div>
<div class="b" style="left:18.0px;top:664.0px;width:1627.0px;height:1.0px;background:#8ba0c2;"></div>
<div class="c x" style="left:20.3px;top:649px;width:51.7px">Midmarket</div>
<div class="c x" style="left:75.2px;top:649px;width:31.8px">United States</div>
<div class="c x" style="left:114.3px;top:649px;width:24.7px">Montana</div>
<div class="c x" style="left:146.3px;top:649px;width:143.7px">None</div>
<div class="c r" style="left:291px;top:649px;width:159.0px">615</div>
<div class="c" style="left:458.8px;top:649px;width:8px">$</div>
<div class="c r" style="left:465px;top:649px;width:215.1px">5.00</div>
<div class="c" style="left:692.8px;top:649px;width:8px">$</div>
<div class="c r" style="left:699px;top:649px;width:56.1px">15.00</div>
<div class="c" style="left:767.8px;top:649px;width:8px">$</div>
<div class="c r" style="left:774px;top:649px;width:190.1px">9,225.00</div>
<div class="c" style="left:976.8px;top:649px;width:8px">$</div>
<div class="c r" style="left:983px;top:649px;width:43.0px">-</div>
<div class="c" style="left:1051.8px;top:649px;width:8px">$</div>
<div class="c r" style="left:1058px;top:649px;width:86.1px">9,225.00</div>
<div class="c" style="left:1156.8px;top:649px;width:8px">$</div>
<div class="c r" style="left:1163px;top:649px;width:50.1px">6,150.00</div>
<div class="c" style="left:1225.8px;top:649px;width:8px">$</div>
<div class="c r" style="left:1232px;top:649px;width:91.1px">3,075.00</div>
<div class="c r" style="left:1330px;top:649px;width:65.6px">01-12-2014</div>
<div class="c r" style="left:1399px;top:649px;width:98.4px">12</div>
<div class="c x" style="left:1506.8px;top:649px;width:92.2px">December</div>
<div class="c" style="left:1602.2px;top:649px;width:41.8px">2014</div>
<div class="gt" style="left:1600px;top:648px"></div>
<div class="b" style="left:18.0px;top:681.0px;width:1627.0px;height:1.0px;background:#8ba0c2;"></div>
<div class="c x" style="left:20.3px;top:666px;width:51.7px">Government</div>
<div class="c x" style="left:75.2px;top:666px;width:31.8px">Canada</div>
<div class="c x" style="left:114.3px;top:666px;width:24.7px">Paseo</div>
<div class="c x" style="left:146.3px;top:666px;width:143.7px">None</div>
<div class="c r" style="left:291px;top:666px;width:159.0px">292</div>
<div class="c" style="left:458.8px;top:666px;width:8px">$</div>
<div class="c r" style="left:465px;top:666px;width:215.1px">10.00</div>
<div class="c" style="left:692.8px;top:666px;width:8px">$</div>
<div class="c r" style="left:699px;top:666px;width:56.1px">20.00</div>
<div class="c" style="left:767.8px;top:666px;width:8px">$</div>
<div class="c r" style="left:774px;top:666px;width:190.1px">5,840.00</div>
<div class="c" style="left:976.8px;top:666px;width:8px">$</div>
<div class="c r" style="left:983px;top:666px;width:43.0px">-</div>
<div class="c" style="left:1051.8px;top:666px;width:8px">$</div>
<div class="c r" style="left:1058px;top:666px;width:86.1px">5,840.00</div>
<div class="c" style="left:1156.8px;top:666px;width:8px">$</div>
<div class="c r" style="left:1163px;top:666px;width:50.1px">2,920.00</div>
<div class="c" style="left:1225.8px;top:666px;width:8px">$</div>
<div class="c r" style="left:1232px;top:666px;width:91.1px">2,920.00</div>
<div class="c r" style="left:1330px;top:666px;width:65.6px">01-02-2014</div>
<div class="c r" style="left:1399px;top:666px;width:98.4px">2</div>
<div class="c x" style="left:1506.8px;top:666px;width:92.2px">February</div>
<div class="c" style="left:1602.2px;top:666px;width:41.8px">2014</div>
<div class="gt" style="left:1600px;top:665px"></div>
<div class="b" style="left:18.0px;top:698.0px;width:1627.0px;height:1.0px;background:#8ba0c2;"></div>
<div class="c x" style="left:20.3px;top:683px;width:51.7px">Midmarket</div>
<div class="c x" style="left:75.2px;top:683px;width:31.8px">Mexico</div>
<div class="c x" style="left:114.3px;top:683px;width:24.7px">Paseo</div>
<div class="c x" style="left:146.3px;top:683px;width:143.7px">None</div>
<div class="c r" style="left:291px;top:683px;width:159.0px">974</div>
<div class="c" style="left:458.8px;top:683px;width:8px">$</div>
<div class="c r" style="left:465px;top:683px;width:215.1px">10.00</div>
<div class="c" style="left:692.8px;top:683px;width:8px">$</div>
<div class="c r" style="left:699px;top:683px;width:56.1px">15.00</div>
<div class="c" style="left:767.8px;top:683px;width:8px">$</div>
<div class="c r" style="left:774px;top:683px;width:190.1px">14,610.00</div>
<div class="c" style="left:976.8px;top:683px;width:8px">$</div>
<div class="c r" style="left:983px;top:683px;width:43.0px">-</div>
<div class="c" style="left:1051.8px;top:683px;width:8px">$</div>
<div class="c r" style="left:1058px;top:683px;width:86.1px">14,610.00</div>
<div class="c" style="left:1156.8px;top:683px;width:8px">$</div>
<div class="c r" style="left:1163px;top:683px;width:50.1px">9,740.00</div>
<div class="c" style="left:1225.8px;top:683px;width:8px">$</div>
<div class="c r" style="left:1232px;top:683px;width:91.1px">4,870.00</div>
<div class="c r" style="left:1330px;top:683px;width:65.6px">01-02-2014</div>
<div class="c r" style="left:1399px;top:683px;width:98.4px">2</div>
<div class="c x" style="left:1506.8px;top:683px;width:92.2px">February</div>
<div class="c" style="left:1602.2px;top:683px;width:41.8px">2014</div>
<div class="gt" style="left:1600px;top:682px"></div>
<div class="b" style="left:18.0px;top:715.0px;width:1627.0px;height:1.0px;background:#8ba0c2;"></div>
<div class="c x" style="left:20.3px;top:700px;width:51.7px">Channel Partners</div>
<div class="c x" style="left:75.2px;top:700px;width:31.8px">Canada</div>
<div class="c x" style="left:114.3px;top:700px;width:24.7px">Paseo</div>
<div class="c x" style="left:146.3px;top:700px;width:143.7px">None</div>
<div class="c r" style="left:291px;top:700px;width:159.0px">2518</div>
<div class="c" style="left:458.8px;top:700px;width:8px">$</div>
<div class="c r" style="left:465px;top:700px;width:215.1px">10.00</div>
<div class="c" style="left:692.8px;top:700px;width:8px">$</div>
<div class="c r" style="left:699px;top:700px;width:56.1px">12.00</div>
<div class="c" style="left:767.8px;top:700px;width:8px">$</div>
<div class="c r" style="left:774px;top:700px;width:190.1px">30,216.00</div>
<div class="c" style="left:976.8px;top:700px;width:8px">$</div>
<div class="c r" style="left:983px;top:700px;width:43.0px">-</div>
<div class="c" style="left:1051.8px;top:700px;width:8px">$</div>
<div class="c r" style="left:1058px;top:700px;width:86.1px">30,216.00</div>
<div class="c" style="left:1156.8px;top:700px;width:8px">$</div>
<div class="c r" style="left:1163px;top:700px;width:50.1px">7,554.00</div>
<div class="c" style="left:1225.8px;top:700px;width:8px">$</div>
<div class="c r" style="left:1232px;top:700px;width:91.1px">22,662.00</div>
<div class="c r" style="left:1330px;top:700px;width:65.6px">01-06-2014</div>
<div class="c r" style="left:1399px;top:700px;width:98.4px">6</div>
<div class="c x" style="left:1506.8px;top:700px;width:92.2px">June</div>
<div class="c" style="left:1602.2px;top:700px;width:41.8px">2014</div>
<div class="gt" style="left:1600px;top:699px"></div>
<div class="b" style="left:18.0px;top:732.0px;width:1627.0px;height:1.0px;background:#8ba0c2;"></div>
<div class="c x" style="left:20.3px;top:717px;width:51.7px">Government</div>
<div class="c x" style="left:75.2px;top:717px;width:31.8px">Germany</div>
<div class="c x" style="left:114.3px;top:717px;width:24.7px">Paseo</div>
<div class="c x" style="left:146.3px;top:717px;width:143.7px">None</div>
<div class="c r" style="left:291px;top:717px;width:159.0px">1006</div>
<div class="c" style="left:458.8px;top:717px;width:8px">$</div>
<div class="c r" style="left:465px;top:717px;width:215.1px">10.00</div>
<div class="c" style="left:692.8px;top:717px;width:8px">$</div>
<div class="c r" style="left:699px;top:717px;width:56.1px">350.00</div>
<div class="c" style="left:767.8px;top:717px;width:8px">$</div>
<div class="c r" style="left:774px;top:717px;width:190.1px">3,52,100.00</div>
<div class="c" style="left:976.8px;top:717px;width:8px">$</div>
<div class="c r" style="left:983px;top:717px;width:43.0px">-</div>
<div class="c" style="left:1051.8px;top:717px;width:8px">$</div>
<div class="c r" style="left:1058px;top:717px;width:86.1px">3,52,100.00</div>
<div class="c r" style="left:1151px;top:717px;width:64.5px">#########</div>
<div class="c" style="left:1225.8px;top:717px;width:8px">$</div>
<div class="c r" style="left:1232px;top:717px;width:91.1px">90,540.00</div>
<div class="c r" style="left:1330px;top:717px;width:65.6px">01-06-2014</div>
<div class="c r" style="left:1399px;top:717px;width:98.4px">6</div>
<div class="c x" style="left:1506.8px;top:717px;width:92.2px">June</div>
<div class="c" style="left:1602.2px;top:717px;width:41.8px">2014</div>
<div class="gt" style="left:1600px;top:716px"></div>
<div class="b" style="left:18.0px;top:749.0px;width:1627.0px;height:1.0px;background:#8ba0c2;"></div>
<div class="c x" style="left:20.3px;top:734px;width:51.7px">Channel Partners</div>
<div class="c x" style="left:75.2px;top:734px;width:31.8px">Germany</div>
<div class="c x" style="left:114.3px;top:734px;width:24.7px">Paseo</div>
<div class="c x" style="left:146.3px;top:734px;width:143.7px">None</div>
<div class="c r" style="left:291px;top:734px;width:159.0px">367</div>
<div class="c" style="left:458.8px;top:734px;width:8px">$</div>
<div class="c r" style="left:465px;top:734px;width:215.1px">10.00</div>
<div class="c" style="left:692.8px;top:734px;width:8px">$</div>
<div class="c r" style="left:699px;top:734px;width:56.1px">12.00</div>
<div class="c" style="left:767.8px;top:734px;width:8px">$</div>
<div class="c r" style="left:774px;top:734px;width:190.1px">4,404.00</div>
<div class="c" style="left:976.8px;top:734px;width:8px">$</div>
<div class="c r" style="left:983px;top:734px;width:43.0px">-</div>
<div class="c" style="left:1051.8px;top:734px;width:8px">$</div>
<div class="c r" style="left:1058px;top:734px;width:86.1px">4,404.00</div>
<div class="c" style="left:1156.8px;top:734px;width:8px">$</div>
<div class="c r" style="left:1163px;top:734px;width:50.1px">1,101.00</div>
<div class="c" style="left:1225.8px;top:734px;width:8px">$</div>
<div class="c r" style="left:1232px;top:734px;width:91.1px">3,303.00</div>
<div class="c r" style="left:1330px;top:734px;width:65.6px">01-07-2014</div>
<div class="c r" style="left:1399px;top:734px;width:98.4px">7</div>
<div class="c x" style="left:1506.8px;top:734px;width:92.2px">July</div>
<div class="c" style="left:1602.2px;top:734px;width:41.8px">2014</div>
<div class="gt" style="left:1600px;top:733px"></div>
<div class="b" style="left:18.0px;top:766.0px;width:1627.0px;height:1.0px;background:#8ba0c2;"></div>
<div class="c x" style="left:20.3px;top:751px;width:51.7px">Government</div>
<div class="c x" style="left:75.2px;top:751px;width:31.8px">Mexico</div>
<div class="c x" style="left:114.3px;top:751px;width:24.7px">Paseo</div>
<div class="c x" style="left:146.3px;top:751px;width:143.7px">None</div>
<div class="c r" style="left:291px;top:751px;width:159.0px">883</div>
<div class="c" style="left:458.8px;top:751px;width:8px">$</div>
<div class="c r" style="left:465px;top:751px;width:215.1px">10.00</div>
<div class="c" style="left:692.8px;top:751px;width:8px">$</div>
<div class="c r" style="left:699px;top:751px;width:56.1px">7.00</div>
<div class="c" style="left:767.8px;top:751px;width:8px">$</div>
<div class="c r" style="left:774px;top:751px;width:190.1px">6,181.00</div>
<div class="c" style="left:976.8px;top:751px;width:8px">$</div>
<div class="c r" style="left:983px;top:751px;width:43.0px">-</div>
<div class="c" style="left:1051.8px;top:751px;width:8px">$</div>
<div class="c r" style="left:1058px;top:751px;width:86.1px">6,181.00</div>
<div class="c" style="left:1156.8px;top:751px;width:8px">$</div>
<div class="c r" style="left:1163px;top:751px;width:50.1px">4,415.00</div>
<div class="c" style="left:1225.8px;top:751px;width:8px">$</div>
<div class="c r" style="left:1232px;top:751px;width:91.1px">1,766.00</div>
<div class="c r" style="left:1330px;top:751px;width:65.6px">01-08-2014</div>
<div class="c r" style="left:1399px;top:751px;width:98.4px">8</div>
<div class="c x" style="left:1506.8px;top:751px;width:92.2px">August</div>
<div class="c" style="left:1602.2px;top:751px;width:41.8px">2014</div>
<div class="gt" style="left:1600px;top:750px"></div>
<div class="b" style="left:18.0px;top:783.0px;width:1627.0px;height:1.0px;background:#8ba0c2;"></div>
<div class="c x" style="left:20.3px;top:768px;width:51.7px">Midmarket</div>
<div class="c x" style="left:75.2px;top:768px;width:31.8px">France</div>
<div class="c x" style="left:114.3px;top:768px;width:24.7px">Paseo</div>
<div class="c x" style="left:146.3px;top:768px;width:143.7px">None</div>
<div class="c r" style="left:291px;top:768px;width:159.0px">549</div>
<div class="c" style="left:458.8px;top:768px;width:8px">$</div>
<div class="c r" style="left:465px;top:768px;width:215.1px">10.00</div>
<div class="c" style="left:692.8px;top:768px;width:8px">$</div>
<div class="c r" style="left:699px;top:768px;width:56.1px">15.00</div>
<div class="c" style="left:767.8px;top:768px;width:8px">$</div>
<div class="c r" style="left:774px;top:768px;width:190.1px">8,235.00</div>
<div class="c" style="left:976.8px;top:768px;width:8px">$</div>
<div class="c r" style="left:983px;top:768px;width:43.0px">-</div>
<div class="c" style="left:1051.8px;top:768px;width:8px">$</div>
<div class="c r" style="left:1058px;top:768px;width:86.1px">8,235.00</div>
<div class="c" style="left:1156.8px;top:768px;width:8px">$</div>
<div class="c r" style="left:1163px;top:768px;width:50.1px">5,490.00</div>
<div class="c" style="left:1225.8px;top:768px;width:8px">$</div>
<div class="c r" style="left:1232px;top:768px;width:91.1px">2,745.00</div>
<div class="c r" style="left:1330px;top:768px;width:65.6px">01-09-2013</div>
<div class="c r" style="left:1399px;top:768px;width:98.4px">9</div>
<div class="c x" style="left:1506.8px;top:768px;width:92.2px">September</div>
<div class="c" style="left:1602.2px;top:768px;width:41.8px">2013</div>
<div class="gt" style="left:1600px;top:767px"></div>
<div class="b" style="left:18.0px;top:800.0px;width:1627.0px;height:1.0px;background:#8ba0c2;"></div>
<div class="c x" style="left:20.3px;top:785px;width:51.7px">Small Business</div>
<div class="c x" style="left:75.2px;top:785px;width:31.8px">Mexico</div>
<div class="c x" style="left:114.3px;top:785px;width:24.7px">Paseo</div>
<div class="c x" style="left:146.3px;top:785px;width:143.7px">None</div>
<div class="c r" style="left:291px;top:785px;width:159.0px">788</div>
<div class="c" style="left:458.8px;top:785px;width:8px">$</div>
<div class="c r" style="left:465px;top:785px;width:215.1px">10.00</div>
<div class="c" style="left:692.8px;top:785px;width:8px">$</div>
<div class="c r" style="left:699px;top:785px;width:56.1px">300.00</div>
<div class="c" style="left:767.8px;top:785px;width:8px">$</div>
<div class="c r" style="left:774px;top:785px;width:190.1px">2,36,400.00</div>
<div class="c" style="left:976.8px;top:785px;width:8px">$</div>
<div class="c r" style="left:983px;top:785px;width:43.0px">-</div>
<div class="c" style="left:1051.8px;top:785px;width:8px">$</div>
<div class="c r" style="left:1058px;top:785px;width:86.1px">2,36,400.00</div>
<div class="c r" style="left:1151px;top:785px;width:64.5px">#########</div>
<div class="c" style="left:1225.8px;top:785px;width:8px">$</div>
<div class="c r" style="left:1232px;top:785px;width:91.1px">39,400.00</div>
<div class="c r" style="left:1330px;top:785px;width:65.6px">01-09-2013</div>
<div class="c r" style="left:1399px;top:785px;width:98.4px">9</div>
<div class="c x" style="left:1506.8px;top:785px;width:92.2px">September</div>
<div class="c" style="left:1602.2px;top:785px;width:41.8px">2013</div>
<div class="gt" style="left:1600px;top:784px"></div>
<div class="b" style="left:18.0px;top:817.0px;width:1627.0px;height:1.0px;background:#8ba0c2;"></div>
<div class="c x" style="left:20.3px;top:802px;width:51.7px">Midmarket</div>
<div class="c x" style="left:75.2px;top:802px;width:31.8px">Mexico</div>
<div class="c x" style="left:114.3px;top:802px;width:24.7px">Paseo</div>
<div class="c x" style="left:146.3px;top:802px;width:143.7px">None</div>
<div class="c r" style="left:291px;top:802px;width:159.0px">2472</div>
<div class="c" style="left:458.8px;top:802px;width:8px">$</div>
<div class="c r" style="left:465px;top:802px;width:215.1px">10.00</div>
<div class="c" style="left:692.8px;top:802px;width:8px">$</div>
<div class="c r" style="left:699px;top:802px;width:56.1px">15.00</div>
<div class="c" style="left:767.8px;top:802px;width:8px">$</div>
<div class="c r" style="left:774px;top:802px;width:190.1px">37,080.00</div>
<div class="c" style="left:976.8px;top:802px;width:8px">$</div>
<div class="c r" style="left:983px;top:802px;width:43.0px">-</div>
<div class="c" style="left:1051.8px;top:802px;width:8px">$</div>
<div class="c r" style="left:1058px;top:802px;width:86.1px">37,080.00</div>
<div class="c" style="left:1156.8px;top:802px;width:8px">$</div>
<div class="c r" style="left:1163px;top:802px;width:50.1px">24,720.00</div>
<div class="c" style="left:1225.8px;top:802px;width:8px">$</div>
<div class="c r" style="left:1232px;top:802px;width:91.1px">12,360.00</div>
<div class="c r" style="left:1330px;top:802px;width:65.6px">01-09-2014</div>
<div class="c r" style="left:1399px;top:802px;width:98.4px">9</div>
<div class="c x" style="left:1506.8px;top:802px;width:92.2px">September</div>
<div class="c" style="left:1602.2px;top:802px;width:41.8px">2014</div>
<div class="gt" style="left:1600px;top:801px"></div>
<div class="b" style="left:18.0px;top:834.0px;width:1627.0px;height:1.0px;background:#8ba0c2;"></div>
<div class="c x" style="left:20.3px;top:819px;width:51.7px">Government</div>
<div class="c x" style="left:75.2px;top:819px;width:31.8px">United States</div>
<div class="c x" style="left:114.3px;top:819px;width:24.7px">Paseo</div>
<div class="c x" style="left:146.3px;top:819px;width:143.7px">None</div>
<div class="c r" style="left:291px;top:819px;width:159.0px">1143</div>
<div class="c" style="left:458.8px;top:819px;width:8px">$</div>
<div class="c r" style="left:465px;top:819px;width:215.1px">10.00</div>
<div class="c" style="left:692.8px;top:819px;width:8px">$</div>
<div class="c r" style="left:699px;top:819px;width:56.1px">7.00</div>
<div class="c" style="left:767.8px;top:819px;width:8px">$</div>
<div class="c r" style="left:774px;top:819px;width:190.1px">8,001.00</div>
<div class="c" style="left:976.8px;top:819px;width:8px">$</div>
<div class="c r" style="left:983px;top:819px;width:43.0px">-</div>
<div class="c" style="left:1051.8px;top:819px;width:8px">$</div>
<div class="c r" style="left:1058px;top:819px;width:86.1px">8,001.00</div>
<div class="c" style="left:1156.8px;top:819px;width:8px">$</div>
<div class="c r" style="left:1163px;top:819px;width:50.1px">5,715.00</div>
<div class="c" style="left:1225.8px;top:819px;width:8px">$</div>
<div class="c r" style="left:1232px;top:819px;width:91.1px">2,286.00</div>
<div class="c r" style="left:1330px;top:819px;width:65.6px">01-10-2014</div>
<div class="c r" style="left:1399px;top:819px;width:98.4px">10</div>
<div class="c x" style="left:1506.8px;top:819px;width:92.2px">October</div>
<div class="c" style="left:1602.2px;top:819px;width:41.8px">2014</div>
<div class="gt" style="left:1600px;top:818px"></div>
<div class="b" style="left:18.0px;top:851.0px;width:1627.0px;height:1.0px;background:#8ba0c2;"></div>
<div class="c x" style="left:20.3px;top:836px;width:51.7px">Government</div>
<div class="c x" style="left:75.2px;top:836px;width:31.8px">Canada</div>
<div class="c x" style="left:114.3px;top:836px;width:24.7px">Paseo</div>
<div class="c x" style="left:146.3px;top:836px;width:143.7px">None</div>
<div class="c r" style="left:291px;top:836px;width:159.0px">1725</div>
<div class="c" style="left:458.8px;top:836px;width:8px">$</div>
<div class="c r" style="left:465px;top:836px;width:215.1px">10.00</div>
<div class="c" style="left:692.8px;top:836px;width:8px">$</div>
<div class="c r" style="left:699px;top:836px;width:56.1px">350.00</div>
<div class="c" style="left:767.8px;top:836px;width:8px">$</div>
<div class="c r" style="left:774px;top:836px;width:190.1px">6,03,750.00</div>
<div class="c" style="left:976.8px;top:836px;width:8px">$</div>
<div class="c r" style="left:983px;top:836px;width:43.0px">-</div>
<div class="c" style="left:1051.8px;top:836px;width:8px">$</div>
<div class="c r" style="left:1058px;top:836px;width:86.1px">6,03,750.00</div>
<div class="c r" style="left:1151px;top:836px;width:64.5px">#########</div>
<div class="c" style="left:1225.8px;top:836px;width:8px">$</div>
<div class="c r" style="left:1232px;top:836px;width:91.1px">1,55,250.00</div>
<div class="c r" style="left:1330px;top:836px;width:65.6px">01-11-2013</div>
<div class="c r" style="left:1399px;top:836px;width:98.4px">11</div>
<div class="c x" style="left:1506.8px;top:836px;width:92.2px">November</div>
<div class="c" style="left:1602.2px;top:836px;width:41.8px">2013</div>
<div class="gt" style="left:1600px;top:835px"></div>
<div class="b" style="left:18.0px;top:868.0px;width:1627.0px;height:1.0px;background:#8ba0c2;"></div>
<div class="c x" style="left:20.3px;top:853px;width:51.7px">Channel Partners</div>
<div class="c x" style="left:75.2px;top:853px;width:31.8px">United States</div>
<div class="c x" style="left:114.3px;top:853px;width:24.7px">Paseo</div>
<div class="c x" style="left:146.3px;top:853px;width:143.7px">None</div>
<div class="c r" style="left:291px;top:853px;width:159.0px">912</div>
<div class="c" style="left:458.8px;top:853px;width:8px">$</div>
<div class="c r" style="left:465px;top:853px;width:215.1px">10.00</div>
<div class="c" style="left:692.8px;top:853px;width:8px">$</div>
<div class="c r" style="left:699px;top:853px;width:56.1px">12.00</div>
<div class="c" style="left:767.8px;top:853px;width:8px">$</div>
<div class="c r" style="left:774px;top:853px;width:190.1px">10,944.00</div>
<div class="c" style="left:976.8px;top:853px;width:8px">$</div>
<div class="c r" style="left:983px;top:853px;width:43.0px">-</div>
<div class="c" style="left:1051.8px;top:853px;width:8px">$</div>
<div class="c r" style="left:1058px;top:853px;width:86.1px">10,944.00</div>
<div class="c" style="left:1156.8px;top:853px;width:8px">$</div>
<div class="c r" style="left:1163px;top:853px;width:50.1px">2,736.00</div>
<div class="c" style="left:1225.8px;top:853px;width:8px">$</div>
<div class="c r" style="left:1232px;top:853px;width:91.1px">8,208.00</div>
<div class="c r" style="left:1330px;top:853px;width:65.6px">01-11-2013</div>
<div class="c r" style="left:1399px;top:853px;width:98.4px">11</div>
<div class="c x" style="left:1506.8px;top:853px;width:92.2px">November</div>
<div class="c" style="left:1602.2px;top:853px;width:41.8px">2013</div>
<div class="gt" style="left:1600px;top:852px"></div>
<div class="b" style="left:16.0px;top:293.0px;width:58.0px;height:20.0px;border:2px solid #1e7145;"></div>
<div class="b" style="left:69.0px;top:308.0px;width:7.0px;height:7.0px;background:#1e7145;border:1px solid #fff;"></div>
</div>
</body></html>
